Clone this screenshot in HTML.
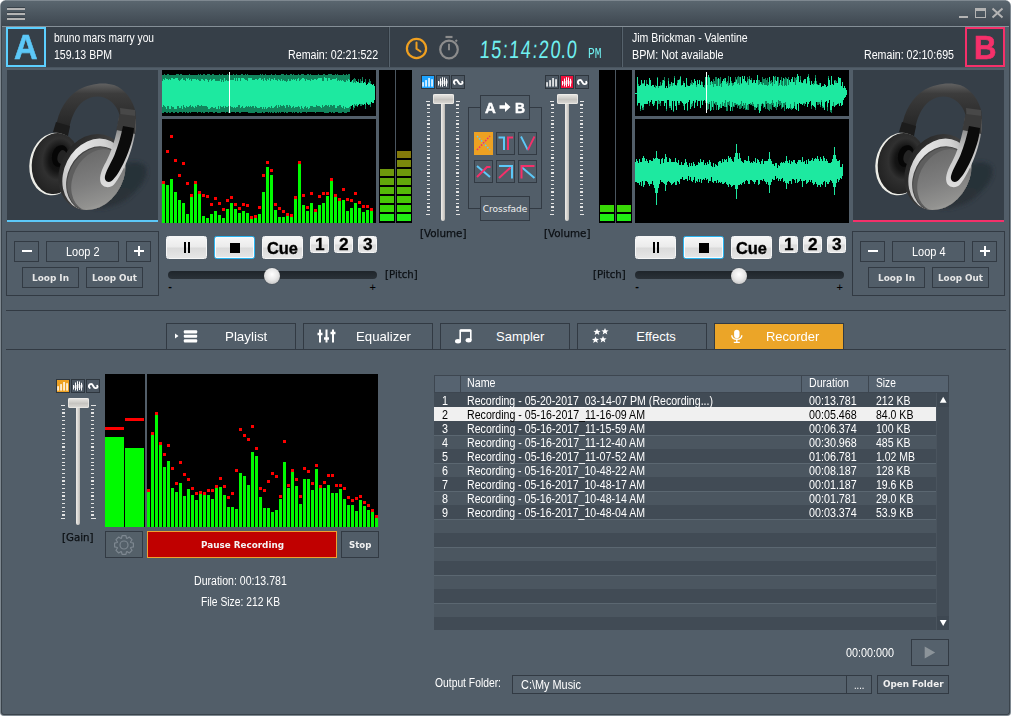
<!DOCTYPE html>
<html lang="en"><head><meta charset="utf-8"><title>DJ Mixer - Recorder</title>
<style>
html,body{margin:0;padding:0;background:#fff;}
body{width:1011px;height:716px;overflow:hidden;position:relative;}
#w{position:absolute;left:0;top:0;width:1011px;height:716px;background:#7f8991;border-radius:6px 6px 4px 4px;overflow:hidden;}
#c{position:absolute;left:1px;top:1px;width:1007px;height:713px;border:1px solid #3a434b;border-top:none;background:#525e69;border-radius:5px 5px 3px 3px;}
#r{position:absolute;left:0;top:0;width:1011px;height:716px;}
#r>div,#r>svg,#r>span{position:absolute;box-sizing:border-box;}
.t b{font-weight:normal;margin:0;}.t i{font-style:normal;margin:0 -1.2px;}
#r svg{overflow:visible;}
.t{white-space:nowrap;line-height:1;transform-origin:0 0;font-family:"Liberation Sans",sans-serif;}
</style></head>
<body>
<div id="w"><div id="c"></div>
<div id="r">
<div style="left:1px;top:1px;width:1009px;height:25px;background:linear-gradient(#5a666f,#4d5861 45%,#3e4750);border-radius:5px 5px 0 0;"></div>
<div style="left:1px;top:0px;width:1009px;height:1px;background:#7e8890;left:5px;width:1001px;"></div>
<div style="left:2px;top:26px;width:1007px;height:1px;background:#858f97;"></div>
<div style="left:7px;top:7px;width:18px;height:1px;background:#39424a;"></div>
<div style="left:7px;top:8px;width:18px;height:2px;background:#b4b4b4;"></div>
<div style="left:7px;top:12px;width:18px;height:1px;background:#39424a;"></div>
<div style="left:7px;top:13px;width:18px;height:2px;background:#b4b4b4;"></div>
<div style="left:7px;top:17px;width:18px;height:1px;background:#39424a;"></div>
<div style="left:7px;top:18px;width:18px;height:2px;background:#b4b4b4;"></div>
<div style="left:959px;top:16px;width:9px;height:2px;background:#b4b4b4;"></div>
<div style="left:975px;top:8px;width:11px;height:10px;border:1px solid #b4b4b4;border-top-width:3px;"></div>
<svg style="left:991px;top:7px;" width="13" height="12" viewBox="0 0 13 12"><path d="M1.5 1.5L11.5 10.5M11.5 1.5L1.5 10.5" stroke="#b4b4b4" stroke-width="2" fill="none"/></svg>
<div style="left:6px;top:27px;width:999px;height:40px;background:#363f48;"></div>
<div style="left:6px;top:67px;width:999px;height:1px;background:#4a555f;"></div>
<div style="left:389px;top:27px;width:1px;height:40px;background:#56626c;"></div>
<div style="left:388px;top:27px;width:1px;height:40px;background:#2f373f;"></div>
<div style="left:622px;top:27px;width:1px;height:40px;background:#56626c;"></div>
<div style="left:621px;top:27px;width:1px;height:40px;background:#2f373f;"></div>
<div style="left:6px;top:27px;width:40px;height:40px;border:2px solid #5ccfff;background:#363f48;"></div>
<span class="t" id="t1" style="left:14.00px;top:29.60px;font-size:34.5px;color:#5cc8f8;font-family:'Liberation Sans', sans-serif;font-weight:bold;transform:scaleX(0.9470);-webkit-text-stroke:0.6px #5cc8f8;">A</span>
<div style="left:965px;top:27px;width:40px;height:40px;border:2px solid #f5306a;background:#363f48;"></div>
<span class="t" id="t2" style="left:974.05px;top:31.07px;font-size:33px;color:#f5306a;font-family:'Liberation Sans', sans-serif;font-weight:bold;transform:scaleX(0.9436);-webkit-text-stroke:0.7px #f5306a;">B</span>
<span class="t" id="t3" style="left:54.40px;top:31.84px;font-size:12px;color:#fff;font-family:'Liberation Sans', sans-serif;transform:scaleX(0.8520);">bruno mars marry you</span>
<span class="t" id="t4" style="left:54.40px;top:48.64px;font-size:12px;color:#fff;font-family:'Liberation Sans', sans-serif;transform:scaleX(0.8782);">159.13 BPM</span>
<span class="t" id="t5" style="left:288.40px;top:48.64px;font-size:12px;color:#fff;font-family:'Liberation Sans', sans-serif;transform:scaleX(0.8895);">Remain: 02:21:522</span>
<span class="t" id="t6" style="left:631.80px;top:31.84px;font-size:12px;color:#fff;font-family:'Liberation Sans', sans-serif;transform:scaleX(0.8777);">Jim Brickman - Valentine</span>
<span class="t" id="t7" style="left:631.80px;top:48.64px;font-size:12px;color:#fff;font-family:'Liberation Sans', sans-serif;transform:scaleX(0.8976);">BPM: Not available</span>
<span class="t" id="t8" style="left:864.40px;top:48.64px;font-size:12px;color:#fff;font-family:'Liberation Sans', sans-serif;transform:scaleX(0.8875);">Remain: 02:10:695</span>
<svg style="left:404px;top:36px;" width="26" height="26" viewBox="0 0 26 26"><circle cx="12.5" cy="12.5" r="9.6" fill="none" stroke="#f0a020" stroke-width="2.2"/><path d="M12.5 6.5V12.7L16.5 15.5" fill="none" stroke="#f0a020" stroke-width="2" stroke-linecap="round"/></svg>
<svg style="left:436px;top:33px;" width="26" height="30" viewBox="0 0 26 30"><circle cx="13" cy="16.5" r="8.8" fill="none" stroke="#8c8c8c" stroke-width="2.2"/><path d="M13 10.8V17.2" stroke="#8c8c8c" stroke-width="1.9"/><path d="M9.5 4H16.5" stroke="#8c8c8c" stroke-width="2.2"/><path d="M19.5 8.5L21 7" stroke="#8c8c8c" stroke-width="2"/></svg>
<span class="t" id="t9" style="left:478.80px;top:37.44px;font-size:25px;color:#70f0f0;font-family:'Liberation Sans', sans-serif;transform:scaleX(0.7244) skewX(-6deg);transform-origin:0 100%;letter-spacing:2px;">15<b>:</b>14<b>:</b>20<i>.</i>0</span>
<span class="t" id="t10" style="left:588.00px;top:46.50px;font-size:15px;color:#70f0f0;font-family:'Liberation Mono', monospace;transform:scaleX(0.7494);">PM</span>
<div style="left:7px;top:70px;width:151.4px;height:150px;background:#363f48;"></div>
<svg style="left:7px;top:70px;" width="152" height="150" viewBox="0 0 152 150">
<defs>
<linearGradient id="hb7" x1="0" y1="0" x2="0" y2="1"><stop offset="0" stop-color="#626262"/><stop offset=".22" stop-color="#3c3c3c"/><stop offset="1" stop-color="#242424"/></linearGradient>
<linearGradient id="cf7" x1=".2" y1=".05" x2=".85" y2=".9"><stop offset="0" stop-color="#6a6a6a"/><stop offset=".5" stop-color="#7e7e7e"/><stop offset=".85" stop-color="#929290"/><stop offset="1" stop-color="#a6a6a2"/></linearGradient>
<radialGradient id="cb7" cx=".55" cy=".42" r=".62"><stop offset="0" stop-color="#0a0a0a"/><stop offset=".32" stop-color="#141414"/><stop offset=".55" stop-color="#303030"/><stop offset="1" stop-color="#202020"/></radialGradient>
<linearGradient id="rim7" x1="0" y1=".9" x2=".9" y2="0"><stop offset="0" stop-color="#b4b4b4"/><stop offset=".35" stop-color="#e6e6e6"/><stop offset=".7" stop-color="#d2d2d2"/><stop offset="1" stop-color="#9a9a9a"/></linearGradient>
<linearGradient id="od7" x1="0" y1="0" x2="1" y2="0"><stop offset="0" stop-color="#262626"/><stop offset=".5" stop-color="#3e3e3e"/><stop offset="1" stop-color="#4a4a4a"/></linearGradient>
<linearGradient id="yk7" x1="0" y1="0" x2="0" y2="1"><stop offset="0" stop-color="#6a6a6a"/><stop offset=".45" stop-color="#c4c4c4"/><stop offset="1" stop-color="#dedede"/></linearGradient>
<filter id="bl7" x="-30%" y="-30%" width="160%" height="160%"><feGaussianBlur stdDeviation="2.2"/></filter>
<clipPath id="cp7"><ellipse cx="85" cy="102" rx="32" ry="39.5" transform="rotate(27 85 102)"/></clipPath>
</defs>
<g filter="url(#bl7)"><ellipse cx="111" cy="115" rx="33" ry="16" fill="#283038" transform="rotate(-34 111 115)"/>
<ellipse cx="104" cy="128" rx="22" ry="8" fill="#2a3239" transform="rotate(-18 104 128)"/></g>
<path d="M49 57C51 42 59 27 72 19.500C82 14 96 11.5 107 15C118 19 126 30 128.5 42L128.5 49L113 46.500C111 38 106 31 97 27.500C90 25 82 27 76 31.500C69 37 64 47 62 60Z" fill="url(#hb7)"/>
<path d="M113 38L128 40L128.5 49L113.5 47Z" fill="#484848"/>
<path d="M46 62L49 52L63 56L61 66Z" fill="#1c1c1c"/>
<ellipse cx="47" cy="94" rx="24.5" ry="31.5" fill="#ecece6" transform="rotate(10 47 94)"/>
<ellipse cx="48.5" cy="93.5" rx="23.6" ry="30.8" fill="url(#cb7)" transform="rotate(10 48.5 93.5)"/>
<ellipse cx="53" cy="86" rx="8" ry="11" fill="#060606" transform="rotate(14 53 86)"/>
<ellipse cx="55" cy="87" rx="4.5" ry="7" fill="#242424" transform="rotate(14 55 87)"/>
<ellipse cx="85" cy="102" rx="32" ry="39.5" fill="url(#od7)" transform="rotate(27 85 102)"/>
<g clip-path="url(#cp7)">
<ellipse cx="87" cy="104.7" rx="30" ry="37.5" fill="url(#rim7)" transform="rotate(27 87 104.7)"/>
<ellipse cx="88.4" cy="109.2" rx="27.9" ry="34.1" fill="#444" transform="rotate(27 88.4 109.2)"/>
<ellipse cx="88.75" cy="109.5" rx="27.25" ry="33.5" fill="#5e5e5e" transform="rotate(27 88.75 109.5)"/>
<ellipse cx="91" cy="110.6" rx="25" ry="32.8" fill="url(#cf7)" transform="rotate(27 91 110.6)"/>
</g>
<path d="M112 47L129 49C129.5 60 126.5 74 122 86C117.5 98 111.5 109 107 114.500C102.5 119 95 117.5 93.5 112C92 106 95 99 99 92C103.5 83 107.5 72 110 60Z" fill="url(#yk7)"/>
<path d="M112.5 44L129 46L128.3 64L109.3 60Z" fill="#3a3a3a"/>
<path d="M116 56L127 58C126.5 68 122.5 80 118 90C113.5 100 108.5 108 104.5 111C101 113.5 97 111 98 106C99.5 100 104 93 107.5 85C111 76 114 66 116 56Z" fill="#0b0b0b"/>
</svg>
<div style="left:7px;top:219.8px;width:151.4px;height:2.3px;background:#5cc8f8;"></div>
<div style="left:853px;top:70px;width:151.4px;height:150px;background:#363f48;"></div>
<svg style="left:853px;top:70px;" width="152" height="150" viewBox="0 0 152 150">
<defs>
<linearGradient id="hb853" x1="0" y1="0" x2="0" y2="1"><stop offset="0" stop-color="#626262"/><stop offset=".22" stop-color="#3c3c3c"/><stop offset="1" stop-color="#242424"/></linearGradient>
<linearGradient id="cf853" x1=".2" y1=".05" x2=".85" y2=".9"><stop offset="0" stop-color="#6a6a6a"/><stop offset=".5" stop-color="#7e7e7e"/><stop offset=".85" stop-color="#929290"/><stop offset="1" stop-color="#a6a6a2"/></linearGradient>
<radialGradient id="cb853" cx=".55" cy=".42" r=".62"><stop offset="0" stop-color="#0a0a0a"/><stop offset=".32" stop-color="#141414"/><stop offset=".55" stop-color="#303030"/><stop offset="1" stop-color="#202020"/></radialGradient>
<linearGradient id="rim853" x1="0" y1=".9" x2=".9" y2="0"><stop offset="0" stop-color="#b4b4b4"/><stop offset=".35" stop-color="#e6e6e6"/><stop offset=".7" stop-color="#d2d2d2"/><stop offset="1" stop-color="#9a9a9a"/></linearGradient>
<linearGradient id="od853" x1="0" y1="0" x2="1" y2="0"><stop offset="0" stop-color="#262626"/><stop offset=".5" stop-color="#3e3e3e"/><stop offset="1" stop-color="#4a4a4a"/></linearGradient>
<linearGradient id="yk853" x1="0" y1="0" x2="0" y2="1"><stop offset="0" stop-color="#6a6a6a"/><stop offset=".45" stop-color="#c4c4c4"/><stop offset="1" stop-color="#dedede"/></linearGradient>
<filter id="bl853" x="-30%" y="-30%" width="160%" height="160%"><feGaussianBlur stdDeviation="2.2"/></filter>
<clipPath id="cp853"><ellipse cx="85" cy="102" rx="32" ry="39.5" transform="rotate(27 85 102)"/></clipPath>
</defs>
<g filter="url(#bl853)"><ellipse cx="111" cy="115" rx="33" ry="16" fill="#283038" transform="rotate(-34 111 115)"/>
<ellipse cx="104" cy="128" rx="22" ry="8" fill="#2a3239" transform="rotate(-18 104 128)"/></g>
<path d="M49 57C51 42 59 27 72 19.500C82 14 96 11.5 107 15C118 19 126 30 128.5 42L128.5 49L113 46.500C111 38 106 31 97 27.500C90 25 82 27 76 31.500C69 37 64 47 62 60Z" fill="url(#hb853)"/>
<path d="M113 38L128 40L128.5 49L113.5 47Z" fill="#484848"/>
<path d="M46 62L49 52L63 56L61 66Z" fill="#1c1c1c"/>
<ellipse cx="47" cy="94" rx="24.5" ry="31.5" fill="#ecece6" transform="rotate(10 47 94)"/>
<ellipse cx="48.5" cy="93.5" rx="23.6" ry="30.8" fill="url(#cb853)" transform="rotate(10 48.5 93.5)"/>
<ellipse cx="53" cy="86" rx="8" ry="11" fill="#060606" transform="rotate(14 53 86)"/>
<ellipse cx="55" cy="87" rx="4.5" ry="7" fill="#242424" transform="rotate(14 55 87)"/>
<ellipse cx="85" cy="102" rx="32" ry="39.5" fill="url(#od853)" transform="rotate(27 85 102)"/>
<g clip-path="url(#cp853)">
<ellipse cx="87" cy="104.7" rx="30" ry="37.5" fill="url(#rim853)" transform="rotate(27 87 104.7)"/>
<ellipse cx="88.4" cy="109.2" rx="27.9" ry="34.1" fill="#444" transform="rotate(27 88.4 109.2)"/>
<ellipse cx="88.75" cy="109.5" rx="27.25" ry="33.5" fill="#5e5e5e" transform="rotate(27 88.75 109.5)"/>
<ellipse cx="91" cy="110.6" rx="25" ry="32.8" fill="url(#cf853)" transform="rotate(27 91 110.6)"/>
</g>
<path d="M112 47L129 49C129.5 60 126.5 74 122 86C117.5 98 111.5 109 107 114.500C102.5 119 95 117.5 93.5 112C92 106 95 99 99 92C103.5 83 107.5 72 110 60Z" fill="url(#yk853)"/>
<path d="M112.5 44L129 46L128.3 64L109.3 60Z" fill="#3a3a3a"/>
<path d="M116 56L127 58C126.5 68 122.5 80 118 90C113.5 100 108.5 108 104.5 111C101 113.5 97 111 98 106C99.5 100 104 93 107.5 85C111 76 114 66 116 56Z" fill="#0b0b0b"/>
</svg>
<div style="left:853px;top:219.8px;width:151.4px;height:2.3px;background:#f5306a;"></div>
<div style="left:162px;top:70px;width:214px;height:46px;background:#000;"></div>
<svg style="left:162px;top:70px;shape-rendering:crispEdges;" width="214" height="46" viewBox="0 0 214 46"><path d="M0.5 5V43M1.5 5V43M2.5 4V42M3.5 5V42M4.5 5V43M5.5 4V43M6.5 4V42M7.5 5V43M8.5 5V43M9.5 5V42M10.5 5V42M11.5 5V43M12.5 5V43M13.5 5V42M14.5 4V42M15.5 4V43M16.5 4V43M17.5 5V42M18.5 4V42M19.5 4V42M20.5 5V43M21.5 5V42M22.5 5V42M23.5 5V43M24.5 5V42M25.5 5V43M26.5 5V43M27.5 4V42M28.5 5V43M29.5 5V42M30.5 5V42M31.5 5V42M32.5 5V42M33.5 5V42M34.5 5V42M35.5 5V43M36.5 4V42M37.5 5V42M38.5 4V42M39.5 5V43M40.5 5V42M41.5 4V43M42.5 4V43M43.5 5V42M44.5 5V42M45.5 4V42M46.5 4V43M47.5 4V42M48.5 5V42M49.5 5V42M50.5 4V42M51.5 4V43M52.5 5V43M53.5 5V42M54.5 5V42M55.5 5V43M56.5 5V43M57.5 4V43M58.5 5V43M59.5 5V42M60.5 4V42M61.5 5V42M62.5 5V42M63.5 5V43M64.5 5V42M65.5 4V42M66.5 5V43M67.5 4V43M68.5 5V43M69.5 5V42M70.5 5V42M71.5 4V42M72.5 5V42M73.5 5V43M74.5 4V42M75.5 5V42M76.5 5V42M77.5 5V43M78.5 5V43M79.5 4V42M80.5 4V42M81.5 5V42M82.5 5V42M83.5 4V42M84.5 5V42M85.5 4V42M86.5 5V43M87.5 5V43M88.5 5V43M89.5 5V43M90.5 5V43M91.5 5V43M92.5 5V43M93.5 5V42M94.5 5V42M95.5 5V43M96.5 5V43M97.5 5V43M98.5 4V43M99.5 5V43M100.5 4V42M101.5 5V43M102.5 5V43M103.5 4V42M104.5 5V42M105.5 5V42M106.5 5V43M107.5 5V42M108.5 5V43M109.5 4V42M110.5 5V43M111.5 5V43M112.5 5V42M113.5 4V43M114.5 5V43M115.5 5V42M116.5 5V43M117.5 5V42M118.5 5V43M119.5 4V42M120.5 4V42M121.5 4V42M122.5 5V43M123.5 5V42M124.5 4V43M125.5 5V43M126.5 5V42M127.5 5V42M128.5 4V42M129.5 4V42M130.5 5V43M131.5 4V42M132.5 5V43M133.5 5V42M134.5 5V42M135.5 5V43M136.5 4V43M137.5 5V42M138.5 5V43M139.5 4V43M140.5 4V42M141.5 4V42M142.5 5V42M143.5 5V42M144.5 5V43M145.5 4V42M146.5 4V42M147.5 5V42M148.5 4V42M149.5 5V42M150.5 5V42M151.5 5V42M152.5 5V42M153.5 5V43M154.5 5V42M155.5 5V42M156.5 4V42M157.5 5V42M158.5 5V42M159.5 5V42M160.5 5V42M161.5 4V42M162.5 4V43M163.5 5V43M164.5 5V43M165.5 5V43M166.5 4V43M167.5 4V42M168.5 4V42M169.5 4V43M170.5 5V42M171.5 5V43M172.5 5V43M173.5 4V42M174.5 5V42M175.5 4V42M176.5 5V43M177.5 5V43M178.5 5V43M179.5 5V43M180.5 5V42M181.5 4V42M182.5 5V43M183.5 5V43M184.5 4V43M185.5 5V42M186.5 4V42M187.5 4V42M188.5 12V39M189.5 11V36M190.5 10V35M191.5 9V40M192.5 8V38M193.5 9V36M194.5 11V36M195.5 12V37M196.5 9V35M197.5 13V34M198.5 9V36M199.5 11V36M200.5 7V35M201.5 13V35M202.5 12V34M203.5 9V39M204.5 15V33M205.5 14V34M206.5 12V35M207.5 9V35M208.5 11V37M209.5 14V32M210.5 15V33M211.5 14V33M212.5 16V30" stroke="#11855c" stroke-width="1" fill="none"/><path d="M0.5 11V37M1.5 9V35M2.5 10V36M3.5 8V37M4.5 9V39M5.5 9V36M6.5 10V36M7.5 9V39M8.5 10V39M9.5 8V36M10.5 8V37M11.5 9V37M12.5 9V39M13.5 8V39M14.5 8V39M15.5 8V36M16.5 10V36M17.5 11V38M18.5 10V38M19.5 9V36M20.5 8V39M21.5 10V35M22.5 10V37M23.5 11V38M24.5 8V36M25.5 9V37M26.5 8V37M27.5 10V36M28.5 9V35M29.5 11V37M30.5 9V36M31.5 9V37M32.5 9V38M33.5 9V36M34.5 10V37M35.5 9V35M36.5 10V35M37.5 11V36M38.5 11V36M39.5 9V35M40.5 9V36M41.5 10V36M42.5 11V36M43.5 9V36M44.5 9V36M45.5 10V37M46.5 12V39M47.5 10V39M48.5 9V38M49.5 11V37M50.5 10V37M51.5 9V38M52.5 9V38M53.5 11V37M54.5 11V39M55.5 11V39M56.5 11V36M57.5 11V39M58.5 9V36M59.5 12V37M60.5 10V37M61.5 12V36M62.5 8V38M63.5 11V36M64.5 10V37M65.5 11V37M66.5 11V36M67.5 9V36M68.5 10V36M69.5 10V37M70.5 10V37M71.5 10V38M72.5 8V37M73.5 11V38M74.5 8V37M75.5 11V37M76.5 8V35M77.5 8V35M78.5 11V38M79.5 8V37M80.5 8V36M81.5 8V38M82.5 9V38M83.5 10V37M84.5 10V36M85.5 11V37M86.5 8V36M87.5 8V37M88.5 8V36M89.5 8V37M90.5 10V36M91.5 10V36M92.5 10V38M93.5 9V36M94.5 9V37M95.5 10V38M96.5 9V38M97.5 8V38M98.5 8V37M99.5 10V37M100.5 9V39M101.5 11V37M102.5 8V39M103.5 10V37M104.5 11V39M105.5 9V38M106.5 10V37M107.5 8V37M108.5 11V38M109.5 9V36M110.5 9V38M111.5 10V38M112.5 8V37M113.5 10V36M114.5 10V35M115.5 11V38M116.5 9V35M117.5 10V37M118.5 11V35M119.5 9V36M120.5 11V36M121.5 10V35M122.5 11V36M123.5 11V38M124.5 12V35M125.5 11V35M126.5 9V37M127.5 11V35M128.5 11V36M129.5 9V38M130.5 10V37M131.5 9V36M132.5 10V38M133.5 9V37M134.5 11V37M135.5 9V37M136.5 8V36M137.5 11V37M138.5 10V39M139.5 9V36M140.5 8V38M141.5 8V39M142.5 9V37M143.5 11V36M144.5 9V38M145.5 10V37M146.5 10V39M147.5 10V38M148.5 11V36M149.5 9V36M150.5 10V36M151.5 10V37M152.5 9V37M153.5 9V37M154.5 10V35M155.5 9V36M156.5 8V36M157.5 8V36M158.5 8V37M159.5 8V38M160.5 11V35M161.5 11V37M162.5 7V36M163.5 8V35M164.5 8V35M165.5 11V36M166.5 8V35M167.5 8V37M168.5 10V35M169.5 10V35M170.5 9V36M171.5 9V35M172.5 9V35M173.5 9V38M174.5 8V38M175.5 11V36M176.5 10V36M177.5 11V35M178.5 10V35M179.5 11V37M180.5 10V38M181.5 11V36M182.5 12V39M183.5 12V37M184.5 10V38M185.5 11V38M186.5 9V38M187.5 10V37M188.5 12V36M189.5 12V36M190.5 10V35M191.5 13V37M192.5 12V34M193.5 13V35M194.5 11V34M195.5 12V36M196.5 12V35M197.5 13V34M198.5 13V34M199.5 13V34M200.5 11V34M201.5 13V35M202.5 12V34M203.5 13V35M204.5 15V32M205.5 14V34M206.5 13V35M207.5 13V34M208.5 14V34M209.5 14V32M210.5 15V33M211.5 14V33M212.5 16V30" stroke="#1de9a0" stroke-width="1" fill="none"/><rect x="67" y="2" width="1" height="41" fill="#fff"/></svg>
<div style="left:162px;top:119px;width:214px;height:104px;background:#000;"></div>
<svg style="left:162px;top:119px;shape-rendering:crispEdges;" width="214" height="104" viewBox="0 0 214 104"><rect x="0" y="64" width="3" height="40" fill="#00fa00"/><rect x="0" y="62" width="3" height="3" fill="#f00"/><rect x="4" y="66" width="3" height="38" fill="#00fa00"/><rect x="4" y="31" width="3" height="3" fill="#f00"/><rect x="8" y="60" width="3" height="44" fill="#00fa00"/><rect x="8" y="16" width="3" height="3" fill="#f00"/><rect x="12" y="73" width="3" height="31" fill="#00fa00"/><rect x="12" y="40" width="3" height="3" fill="#f00"/><rect x="16" y="81" width="3" height="23" fill="#00fa00"/><rect x="16" y="55" width="3" height="3" fill="#f00"/><rect x="20" y="84" width="3" height="20" fill="#00fa00"/><rect x="20" y="43" width="3" height="3" fill="#f00"/><rect x="24" y="95" width="3" height="9" fill="#00fa00"/><rect x="24" y="63" width="3" height="3" fill="#f00"/><rect x="28" y="78" width="3" height="26" fill="#00fa00"/><rect x="28" y="75" width="3" height="3" fill="#f00"/><rect x="32" y="64" width="3" height="40" fill="#00fa00"/><rect x="32" y="62" width="3" height="3" fill="#f00"/><rect x="36" y="75" width="3" height="29" fill="#00fa00"/><rect x="36" y="72" width="3" height="3" fill="#f00"/><rect x="40" y="97" width="3" height="7" fill="#00fa00"/><rect x="40" y="75" width="3" height="3" fill="#f00"/><rect x="44" y="99" width="3" height="5" fill="#00fa00"/><rect x="44" y="76" width="3" height="3" fill="#f00"/><rect x="48" y="95" width="3" height="9" fill="#00fa00"/><rect x="48" y="84" width="3" height="3" fill="#f00"/><rect x="52" y="92" width="3" height="12" fill="#00fa00"/><rect x="52" y="78" width="3" height="3" fill="#f00"/><rect x="56" y="96" width="3" height="8" fill="#00fa00"/><rect x="56" y="83" width="3" height="3" fill="#f00"/><rect x="60" y="99" width="3" height="5" fill="#00fa00"/><rect x="60" y="89" width="3" height="3" fill="#f00"/><rect x="64" y="90" width="3" height="14" fill="#00fa00"/><rect x="64" y="80" width="3" height="3" fill="#f00"/><rect x="68" y="84" width="3" height="20" fill="#00fa00"/><rect x="68" y="77" width="3" height="3" fill="#f00"/><rect x="72" y="90" width="3" height="14" fill="#00fa00"/><rect x="72" y="84" width="3" height="3" fill="#f00"/><rect x="76" y="94" width="3" height="10" fill="#00fa00"/><rect x="76" y="88" width="3" height="3" fill="#f00"/><rect x="80" y="92" width="3" height="12" fill="#00fa00"/><rect x="80" y="84" width="3" height="3" fill="#f00"/><rect x="84" y="94" width="3" height="10" fill="#00fa00"/><rect x="84" y="85" width="3" height="3" fill="#f00"/><rect x="88" y="100" width="3" height="4" fill="#00fa00"/><rect x="88" y="97" width="3" height="3" fill="#f00"/><rect x="92" y="99" width="3" height="5" fill="#00fa00"/><rect x="92" y="96" width="3" height="3" fill="#f00"/><rect x="96" y="95" width="3" height="9" fill="#00fa00"/><rect x="96" y="87" width="3" height="3" fill="#f00"/><rect x="100" y="73" width="3" height="31" fill="#00fa00"/><rect x="100" y="55" width="3" height="3" fill="#f00"/><rect x="104" y="48" width="3" height="56" fill="#00fa00"/><rect x="104" y="42" width="3" height="3" fill="#f00"/><rect x="108" y="56" width="3" height="48" fill="#00fa00"/><rect x="108" y="50" width="3" height="3" fill="#f00"/><rect x="112" y="91" width="3" height="13" fill="#00fa00"/><rect x="112" y="84" width="3" height="3" fill="#f00"/><rect x="116" y="98" width="3" height="6" fill="#00fa00"/><rect x="116" y="88" width="3" height="3" fill="#f00"/><rect x="120" y="98" width="3" height="6" fill="#00fa00"/><rect x="120" y="91" width="3" height="3" fill="#f00"/><rect x="124" y="97" width="3" height="7" fill="#00fa00"/><rect x="124" y="94" width="3" height="3" fill="#f00"/><rect x="128" y="98" width="3" height="6" fill="#00fa00"/><rect x="128" y="95" width="3" height="3" fill="#f00"/><rect x="132" y="80" width="3" height="24" fill="#00fa00"/><rect x="132" y="77" width="3" height="3" fill="#f00"/><rect x="136" y="45" width="3" height="59" fill="#00fa00"/><rect x="136" y="42" width="3" height="3" fill="#f00"/><rect x="140" y="86" width="3" height="18" fill="#00fa00"/><rect x="140" y="75" width="3" height="3" fill="#f00"/><rect x="144" y="92" width="3" height="12" fill="#00fa00"/><rect x="144" y="87" width="3" height="3" fill="#f00"/><rect x="148" y="84" width="3" height="20" fill="#00fa00"/><rect x="148" y="73" width="3" height="3" fill="#f00"/><rect x="152" y="93" width="3" height="11" fill="#00fa00"/><rect x="152" y="90" width="3" height="3" fill="#f00"/><rect x="156" y="86" width="3" height="18" fill="#00fa00"/><rect x="156" y="76" width="3" height="3" fill="#f00"/><rect x="160" y="84" width="3" height="20" fill="#00fa00"/><rect x="160" y="73" width="3" height="3" fill="#f00"/><rect x="164" y="77" width="3" height="27" fill="#00fa00"/><rect x="164" y="73" width="3" height="3" fill="#f00"/><rect x="168" y="62" width="3" height="42" fill="#00fa00"/><rect x="168" y="59" width="3" height="3" fill="#f00"/><rect x="172" y="78" width="3" height="26" fill="#00fa00"/><rect x="172" y="75" width="3" height="3" fill="#f00"/><rect x="176" y="82" width="3" height="22" fill="#00fa00"/><rect x="176" y="79" width="3" height="3" fill="#f00"/><rect x="180" y="81" width="3" height="23" fill="#00fa00"/><rect x="180" y="69" width="3" height="3" fill="#f00"/><rect x="184" y="92" width="3" height="12" fill="#00fa00"/><rect x="184" y="79" width="3" height="3" fill="#f00"/><rect x="188" y="89" width="3" height="15" fill="#00fa00"/><rect x="188" y="80" width="3" height="3" fill="#f00"/><rect x="192" y="84" width="3" height="20" fill="#00fa00"/><rect x="192" y="73" width="3" height="3" fill="#f00"/><rect x="196" y="89" width="3" height="15" fill="#00fa00"/><rect x="196" y="82" width="3" height="3" fill="#f00"/><rect x="200" y="93" width="3" height="11" fill="#00fa00"/><rect x="200" y="86" width="3" height="3" fill="#f00"/><rect x="204" y="91" width="3" height="13" fill="#00fa00"/><rect x="204" y="86" width="3" height="3" fill="#f00"/><rect x="208" y="92" width="3" height="12" fill="#00fa00"/><rect x="208" y="89" width="3" height="3" fill="#f00"/></svg>
<div style="left:379px;top:70px;width:33px;height:153px;background:#000;"></div>
<div style="left:395px;top:70px;width:1px;height:153px;background:#4a555f;"></div>
<div style="left:380px;top:214px;width:14px;height:7px;background:#20ee14;"></div>
<div style="left:380px;top:205px;width:14px;height:7px;background:#38d806;"></div>
<div style="left:380px;top:196px;width:14px;height:7px;background:#48c806;"></div>
<div style="left:380px;top:187px;width:14px;height:7px;background:#55b808;"></div>
<div style="left:380px;top:178px;width:14px;height:7px;background:#62a80a;"></div>
<div style="left:380px;top:169px;width:14px;height:7px;background:#6e980c;"></div>
<div style="left:397px;top:214px;width:14px;height:7px;background:#20ee14;"></div>
<div style="left:397px;top:205px;width:14px;height:7px;background:#38d806;"></div>
<div style="left:397px;top:196px;width:14px;height:7px;background:#48c806;"></div>
<div style="left:397px;top:187px;width:14px;height:7px;background:#55b808;"></div>
<div style="left:397px;top:178px;width:14px;height:7px;background:#62a80a;"></div>
<div style="left:397px;top:169px;width:14px;height:7px;background:#6e980c;"></div>
<div style="left:397px;top:160px;width:14px;height:7px;background:#7a880c;"></div>
<div style="left:397px;top:151px;width:14px;height:7px;background:#847a0a;"></div>
<div style="left:599px;top:70px;width:33px;height:153px;background:#000;"></div>
<div style="left:615px;top:70px;width:1px;height:153px;background:#4a555f;"></div>
<div style="left:600px;top:214px;width:14px;height:7px;background:#20ee14;"></div>
<div style="left:600px;top:205px;width:14px;height:7px;background:#38d806;"></div>
<div style="left:617px;top:214px;width:14px;height:7px;background:#20ee14;"></div>
<div style="left:617px;top:205px;width:14px;height:7px;background:#38d806;"></div>
<div style="left:635px;top:70px;width:214px;height:46px;background:#000;"></div>
<svg style="left:635px;top:70px;shape-rendering:crispEdges;" width="214" height="46" viewBox="0 0 214 46"><path d="M0.5 23V24M1.5 23V24M2.5 7V36M3.5 14V33M4.5 16V33M5.5 15V41M6.5 10V36M7.5 13V40M8.5 13V40M9.5 10V34M10.5 16V34M11.5 10V34M12.5 14V34M13.5 15V31M14.5 8V36M15.5 10V32M16.5 16V30M17.5 15V34M18.5 15V36M19.5 17V35M20.5 15V31M21.5 16V31M22.5 7V40M23.5 16V34M24.5 16V34M25.5 12V36M26.5 15V31M27.5 10V31M28.5 10V31M29.5 7V36M30.5 18V33M31.5 16V41M32.5 18V30M33.5 8V30M34.5 14V38M35.5 14V38M36.5 12V40M37.5 13V31M38.5 13V42M39.5 6V31M40.5 15V36M41.5 15V40M42.5 10V31M43.5 10V35M44.5 9V35M45.5 6V31M46.5 15V32M47.5 15V33M48.5 11V36M49.5 13V40M50.5 17V34M51.5 8V33M52.5 15V41M53.5 16V32M54.5 16V30M55.5 13V39M56.5 10V37M57.5 12V36M58.5 13V31M59.5 9V38M60.5 11V33M61.5 15V30M62.5 10V36M63.5 14V31M64.5 10V31M65.5 15V38M66.5 11V31M67.5 12V35M68.5 17V31M69.5 15V30M70.5 7V33M71.5 13V33M72.5 7V40M73.5 5V39M74.5 7V34M75.5 12V41M76.5 11V40M77.5 12V37M78.5 9V40M79.5 11V34M80.5 7V35M81.5 7V40M82.5 9V35M83.5 8V40M84.5 9V39M85.5 7V38M86.5 13V38M87.5 11V36M88.5 9V36M89.5 8V37M90.5 8V37M91.5 12V41M92.5 11V41M93.5 6V35M94.5 13V36M95.5 7V41M96.5 11V37M97.5 13V41M98.5 13V37M99.5 12V37M100.5 7V35M101.5 9V35M102.5 7V38M103.5 6V36M104.5 7V39M105.5 7V39M106.5 13V38M107.5 6V36M108.5 9V39M109.5 6V38M110.5 11V40M111.5 12V40M112.5 7V40M113.5 9V40M114.5 6V34M115.5 10V35M116.5 8V35M117.5 13V36M118.5 10V36M119.5 10V40M120.5 13V40M121.5 10V38M122.5 5V37M123.5 10V40M124.5 10V43M125.5 12V41M126.5 12V36M127.5 7V34M128.5 9V38M129.5 9V37M130.5 8V39M131.5 10V34M132.5 8V39M133.5 12V40M134.5 7V41M135.5 11V39M136.5 10V40M137.5 12V35M138.5 6V37M139.5 7V37M140.5 6V38M141.5 11V40M142.5 7V37M143.5 7V34M144.5 13V36M145.5 10V35M146.5 7V39M147.5 11V38M148.5 8V37M149.5 9V41M150.5 7V35M151.5 8V39M152.5 9V38M153.5 7V39M154.5 10V38M155.5 12V39M156.5 9V40M157.5 7V39M158.5 12V38M159.5 7V36M160.5 8V39M161.5 7V40M162.5 4V34M163.5 6V41M164.5 12V33M165.5 6V34M166.5 12V34M167.5 13V35M168.5 10V34M169.5 9V36M170.5 9V34M171.5 13V32M172.5 7V37M173.5 4V34M174.5 8V32M175.5 15V31M176.5 11V39M177.5 14V35M178.5 13V36M179.5 11V37M180.5 5V40M181.5 11V32M182.5 14V35M183.5 15V35M184.5 13V34M185.5 13V37M186.5 17V32M187.5 16V38M188.5 16V38M189.5 14V40M190.5 15V32M191.5 17V31M192.5 16V41M193.5 6V33M194.5 10V30M195.5 15V42M196.5 6V43M197.5 14V36M198.5 15V36M199.5 10V37M200.5 10V36M201.5 11V35M202.5 13V34M203.5 7V34M204.5 8V36M205.5 8V33M206.5 16V36M207.5 12V35M208.5 18V30M209.5 16V28M210.5 18V27M211.5 20V25" stroke="#11855c" stroke-width="1" fill="none"/><path d="M0.5 23V24M1.5 23V24M2.5 7V35M3.5 16V33M4.5 16V33M5.5 15V39M6.5 10V35M7.5 14V38M8.5 14V37M9.5 10V34M10.5 16V34M11.5 14V34M12.5 14V34M13.5 15V31M14.5 8V33M15.5 10V32M16.5 16V30M17.5 15V34M18.5 15V36M19.5 17V33M20.5 18V31M21.5 16V31M22.5 8V39M23.5 18V30M24.5 16V31M25.5 16V33M26.5 16V31M27.5 13V31M28.5 10V31M29.5 11V36M30.5 18V33M31.5 16V39M32.5 18V30M33.5 11V30M34.5 17V36M35.5 16V36M36.5 12V40M37.5 16V31M38.5 13V41M39.5 8V31M40.5 15V36M41.5 16V40M42.5 13V31M43.5 10V33M44.5 10V33M45.5 7V31M46.5 16V31M47.5 15V33M48.5 13V34M49.5 13V40M50.5 17V34M51.5 8V33M52.5 16V40M53.5 16V32M54.5 16V30M55.5 15V39M56.5 14V34M57.5 15V33M58.5 13V31M59.5 9V38M60.5 11V32M61.5 17V30M62.5 10V36M63.5 14V31M64.5 10V31M65.5 15V38M66.5 12V30M67.5 15V35M68.5 17V31M69.5 18V30M70.5 7V31M71.5 15V32M72.5 15V33M73.5 5V34M74.5 8V32M75.5 15V41M76.5 11V31M77.5 14V37M78.5 17V31M79.5 14V33M80.5 14V32M81.5 16V32M82.5 16V35M83.5 8V40M84.5 16V37M85.5 14V34M86.5 17V38M87.5 11V32M88.5 9V36M89.5 11V33M90.5 8V30M91.5 14V37M92.5 13V32M93.5 16V32M94.5 15V31M95.5 7V41M96.5 13V37M97.5 16V32M98.5 15V36M99.5 12V33M100.5 12V33M101.5 10V34M102.5 14V34M103.5 13V35M104.5 15V35M105.5 7V34M106.5 14V31M107.5 6V36M108.5 9V33M109.5 6V35M110.5 11V33M111.5 13V39M112.5 11V35M113.5 15V34M114.5 9V34M115.5 10V33M116.5 10V34M117.5 13V32M118.5 12V34M119.5 10V37M120.5 13V37M121.5 10V38M122.5 5V34M123.5 15V34M124.5 14V43M125.5 12V41M126.5 14V34M127.5 15V33M128.5 13V34M129.5 15V37M130.5 15V31M131.5 15V31M132.5 16V33M133.5 15V33M134.5 7V34M135.5 14V34M136.5 13V33M137.5 16V30M138.5 6V33M139.5 14V37M140.5 10V36M141.5 11V32M142.5 7V37M143.5 16V30M144.5 15V31M145.5 10V31M146.5 15V33M147.5 16V37M148.5 8V33M149.5 16V33M150.5 15V32M151.5 16V39M152.5 9V38M153.5 15V39M154.5 10V38M155.5 12V34M156.5 9V38M157.5 7V39M158.5 12V38M159.5 12V32M160.5 15V39M161.5 10V40M162.5 4V34M163.5 6V41M164.5 12V33M165.5 10V34M166.5 13V34M167.5 13V35M168.5 11V33M169.5 9V33M170.5 9V34M171.5 14V32M172.5 7V37M173.5 6V34M174.5 11V32M175.5 15V31M176.5 11V36M177.5 14V35M178.5 15V36M179.5 14V37M180.5 8V38M181.5 14V32M182.5 15V32M183.5 15V32M184.5 15V32M185.5 13V35M186.5 17V30M187.5 16V36M188.5 16V37M189.5 14V40M190.5 15V32M191.5 17V31M192.5 16V37M193.5 8V33M194.5 10V30M195.5 15V40M196.5 6V40M197.5 14V36M198.5 15V32M199.5 11V37M200.5 13V35M201.5 13V35M202.5 13V34M203.5 7V33M204.5 8V36M205.5 8V33M206.5 16V36M207.5 12V35M208.5 18V30M209.5 16V28M210.5 18V27M211.5 20V25" stroke="#1de9a0" stroke-width="1" fill="none"/><rect x="71" y="2" width="1" height="41" fill="#fff"/></svg>
<div style="left:635px;top:119px;width:214px;height:104px;background:#000;"></div>
<svg style="left:635px;top:119px;shape-rendering:crispEdges;" width="214" height="104" viewBox="0 0 214 104"><path d="M0.5 43V63M1.5 40V63M2.5 42V64M3.5 44V64M4.5 40V66M5.5 43V63M6.5 43V67M7.5 39V62M8.5 37V68M9.5 39V66M10.5 42V62M11.5 40V62M12.5 42V63M13.5 44V65M14.5 41V67M15.5 41V65M16.5 42V65M17.5 42V62M18.5 39V66M19.5 40V69M20.5 39V74M21.5 32V86M22.5 39V74M23.5 40V69M24.5 40V65M25.5 45V61M26.5 40V63M27.5 39V63M28.5 44V64M29.5 40V65M30.5 35V72M31.5 38V66M32.5 43V63M33.5 43V62M34.5 39V63M35.5 40V64M36.5 43V66M37.5 43V65M38.5 43V64M39.5 43V63M40.5 39V66M41.5 43V66M42.5 44V62M43.5 41V63M44.5 46V65M45.5 46V60M46.5 43V60M47.5 46V58M48.5 46V61M49.5 44V61M50.5 40V60M51.5 43V60M52.5 46V62M53.5 48V57M54.5 44V61M55.5 47V58M56.5 44V62M57.5 47V63M58.5 43V61M59.5 45V58M60.5 47V64M61.5 46V62M62.5 46V63M63.5 43V60M64.5 44V63M65.5 40V60M66.5 43V64M67.5 43V61M68.5 41V60M69.5 46V61M70.5 44V59M71.5 46V61M72.5 43V60M73.5 45V64M74.5 41V62M75.5 43V62M76.5 47V58M77.5 48V63M78.5 44V64M79.5 48V62M80.5 45V62M81.5 46V64M82.5 47V61M83.5 43V64M84.5 42V63M85.5 42V64M86.5 44V63M87.5 40V65M88.5 43V65M89.5 40V64M90.5 41V63M91.5 40V65M92.5 43V66M93.5 37V68M94.5 39V65M95.5 38V66M96.5 40V68M97.5 42V67M98.5 43V66M99.5 38V66M100.5 34V70M101.5 25V80M102.5 34V70M103.5 40V66M104.5 34V66M105.5 39V65M106.5 42V66M107.5 43V64M108.5 44V63M109.5 41V65M110.5 41V62M111.5 42V61M112.5 42V62M113.5 37V65M114.5 42V65M115.5 44V61M116.5 43V61M117.5 44V62M118.5 42V63M119.5 43V65M120.5 39V63M121.5 44V61M122.5 40V61M123.5 41V66M124.5 43V65M125.5 45V61M126.5 42V61M127.5 40V62M128.5 45V60M129.5 42V62M130.5 42V63M131.5 42V65M132.5 42V63M133.5 40V66M134.5 33V74M135.5 40V66M136.5 42V63M137.5 45V60M138.5 45V61M139.5 47V61M140.5 44V57M141.5 44V60M142.5 49V59M143.5 46V62M144.5 47V60M145.5 44V62M146.5 43V60M147.5 44V59M148.5 43V63M149.5 44V62M150.5 42V64M151.5 37V70M152.5 42V64M153.5 44V65M154.5 41V62M155.5 45V62M156.5 42V65M157.5 43V60M158.5 41V60M159.5 41V61M160.5 44V64M161.5 45V60M162.5 43V64M163.5 41V63M164.5 41V62M165.5 41V60M166.5 43V62M167.5 38V68M168.5 43V62M169.5 42V62M170.5 45V61M171.5 41V65M172.5 45V64M173.5 40V63M174.5 42V61M175.5 42V63M176.5 41V61M177.5 39V64M178.5 42V66M179.5 40V65M180.5 39V63M181.5 40V65M182.5 37V68M183.5 40V66M184.5 42V66M185.5 38V68M186.5 40V65M187.5 42V66M188.5 37V63M189.5 39V62M190.5 42V68M191.5 40V63M192.5 42V65M193.5 44V65M194.5 44V63M195.5 44V61M196.5 43V62M197.5 40V64M198.5 36V68M199.5 28V76M200.5 36V68M201.5 40V64M202.5 42V60M203.5 42V63M204.5 41V61M205.5 48V59M206.5 48V60M207.5 45V57" stroke="#1de9a0" stroke-width="1" fill="none"/></svg>
<div style="left:421px;top:75px;width:14px;height:14px;border:1px solid #2e363e;background:#1ea4ff;"></div>
<div style="left:436px;top:75px;width:14px;height:14px;border:1px solid #2e363e;background:#4c5762;"></div>
<div style="left:451px;top:75px;width:14px;height:14px;border:1px solid #2e363e;background:#4c5762;"></div>
<svg style="left:422px;top:76px;" width="12" height="12" viewBox="0 0 12 12"><rect x="0.3" y="6.2" width="1.5" height="4.4" fill="#fff"/><rect x="3.3" y="4.1" width="1.5" height="6.5" fill="#fff"/><rect x="6.3" y="2" width="1.5" height="8.6" fill="#fff"/><rect x="9.3" y="3.2" width="1.5" height="7.4" fill="#fff"/></svg>
<svg style="left:437px;top:76px;" width="12" height="12" viewBox="0 0 12 12"><path d="M1.5 5V9.5M3.5 2.5V10.5M5.5 1.2V10.8M7.5 1.5V10M9.5 2.8V10.6" stroke="#fff" stroke-width="1" fill="none"/><path d="M2.5 5.5V8M4.5 5V9M6.5 4V8M8.5 5V8.5M10.5 4.5V7.5" stroke="#fff" stroke-width="1" fill="none" opacity=".45"/></svg>
<svg style="left:452px;top:76px;" width="12" height="12" viewBox="0 0 12 12"><path d="M2.7 7.9C1 6.4 2 4 4.2 4C6.2 4 6.2 8 8.4 8.1C10.3 8.2 11 7.2 10.2 5.8" stroke="#fff" stroke-width="1.9" fill="none" stroke-linecap="round"/></svg>
<div style="left:545px;top:75px;width:14px;height:14px;border:1px solid #2e363e;background:#4c5762;"></div>
<div style="left:560px;top:75px;width:14px;height:14px;border:1px solid #2e363e;background:#f0103c;"></div>
<div style="left:575px;top:75px;width:14px;height:14px;border:1px solid #2e363e;background:#4c5762;"></div>
<svg style="left:546px;top:76px;" width="12" height="12" viewBox="0 0 12 12"><rect x="0.3" y="6.2" width="1.5" height="4.4" fill="#fff"/><rect x="3.3" y="4.1" width="1.5" height="6.5" fill="#fff"/><rect x="6.3" y="2" width="1.5" height="8.6" fill="#fff"/><rect x="9.3" y="3.2" width="1.5" height="7.4" fill="#fff"/></svg>
<svg style="left:561px;top:76px;" width="12" height="12" viewBox="0 0 12 12"><path d="M1.5 5V9.5M3.5 2.5V10.5M5.5 1.2V10.8M7.5 1.5V10M9.5 2.8V10.6" stroke="#fff" stroke-width="1" fill="none"/><path d="M2.5 5.5V8M4.5 5V9M6.5 4V8M8.5 5V8.5M10.5 4.5V7.5" stroke="#fff" stroke-width="1" fill="none" opacity=".45"/></svg>
<svg style="left:576px;top:76px;" width="12" height="12" viewBox="0 0 12 12"><path d="M2.7 7.9C1 6.4 2 4 4.2 4C6.2 4 6.2 8 8.4 8.1C10.3 8.2 11 7.2 10.2 5.8" stroke="#fff" stroke-width="1.9" fill="none" stroke-linecap="round"/></svg>
<div style="left:425.8px;top:100.7px;width:4.4px;height:1.2px;background:#e4e4e4;"></div>
<div style="left:456px;top:100.7px;width:4.4px;height:1.2px;background:#e4e4e4;"></div>
<div style="left:427.0px;top:104.48px;width:3.2px;height:1.2px;background:#e4e4e4;"></div>
<div style="left:456px;top:104.48px;width:3.2px;height:1.2px;background:#e4e4e4;"></div>
<div style="left:427.0px;top:108.25px;width:3.2px;height:1.2px;background:#e4e4e4;"></div>
<div style="left:456px;top:108.25px;width:3.2px;height:1.2px;background:#e4e4e4;"></div>
<div style="left:427.0px;top:112.03px;width:3.2px;height:1.2px;background:#e4e4e4;"></div>
<div style="left:456px;top:112.03px;width:3.2px;height:1.2px;background:#e4e4e4;"></div>
<div style="left:427.0px;top:115.81px;width:3.2px;height:1.2px;background:#e4e4e4;"></div>
<div style="left:456px;top:115.81px;width:3.2px;height:1.2px;background:#e4e4e4;"></div>
<div style="left:427.0px;top:119.58px;width:3.2px;height:1.2px;background:#e4e4e4;"></div>
<div style="left:456px;top:119.58px;width:3.2px;height:1.2px;background:#e4e4e4;"></div>
<div style="left:427.0px;top:123.36px;width:3.2px;height:1.2px;background:#e4e4e4;"></div>
<div style="left:456px;top:123.36px;width:3.2px;height:1.2px;background:#e4e4e4;"></div>
<div style="left:427.0px;top:127.14px;width:3.2px;height:1.2px;background:#e4e4e4;"></div>
<div style="left:456px;top:127.14px;width:3.2px;height:1.2px;background:#e4e4e4;"></div>
<div style="left:427.0px;top:130.91px;width:3.2px;height:1.2px;background:#e4e4e4;"></div>
<div style="left:456px;top:130.91px;width:3.2px;height:1.2px;background:#e4e4e4;"></div>
<div style="left:427.0px;top:134.69px;width:3.2px;height:1.2px;background:#e4e4e4;"></div>
<div style="left:456px;top:134.69px;width:3.2px;height:1.2px;background:#e4e4e4;"></div>
<div style="left:427.0px;top:138.47px;width:3.2px;height:1.2px;background:#e4e4e4;"></div>
<div style="left:456px;top:138.47px;width:3.2px;height:1.2px;background:#e4e4e4;"></div>
<div style="left:427.0px;top:142.24px;width:3.2px;height:1.2px;background:#e4e4e4;"></div>
<div style="left:456px;top:142.24px;width:3.2px;height:1.2px;background:#e4e4e4;"></div>
<div style="left:427.0px;top:146.02px;width:3.2px;height:1.2px;background:#e4e4e4;"></div>
<div style="left:456px;top:146.02px;width:3.2px;height:1.2px;background:#e4e4e4;"></div>
<div style="left:427.0px;top:149.8px;width:3.2px;height:1.2px;background:#e4e4e4;"></div>
<div style="left:456px;top:149.8px;width:3.2px;height:1.2px;background:#e4e4e4;"></div>
<div style="left:427.0px;top:153.57px;width:3.2px;height:1.2px;background:#e4e4e4;"></div>
<div style="left:456px;top:153.57px;width:3.2px;height:1.2px;background:#e4e4e4;"></div>
<div style="left:427.0px;top:157.35px;width:3.2px;height:1.2px;background:#e4e4e4;"></div>
<div style="left:456px;top:157.35px;width:3.2px;height:1.2px;background:#e4e4e4;"></div>
<div style="left:427.0px;top:161.13px;width:3.2px;height:1.2px;background:#e4e4e4;"></div>
<div style="left:456px;top:161.13px;width:3.2px;height:1.2px;background:#e4e4e4;"></div>
<div style="left:427.0px;top:164.9px;width:3.2px;height:1.2px;background:#e4e4e4;"></div>
<div style="left:456px;top:164.9px;width:3.2px;height:1.2px;background:#e4e4e4;"></div>
<div style="left:427.0px;top:168.68px;width:3.2px;height:1.2px;background:#e4e4e4;"></div>
<div style="left:456px;top:168.68px;width:3.2px;height:1.2px;background:#e4e4e4;"></div>
<div style="left:427.0px;top:172.46px;width:3.2px;height:1.2px;background:#e4e4e4;"></div>
<div style="left:456px;top:172.46px;width:3.2px;height:1.2px;background:#e4e4e4;"></div>
<div style="left:427.0px;top:176.23px;width:3.2px;height:1.2px;background:#e4e4e4;"></div>
<div style="left:456px;top:176.23px;width:3.2px;height:1.2px;background:#e4e4e4;"></div>
<div style="left:427.0px;top:180.01px;width:3.2px;height:1.2px;background:#e4e4e4;"></div>
<div style="left:456px;top:180.01px;width:3.2px;height:1.2px;background:#e4e4e4;"></div>
<div style="left:427.0px;top:183.79px;width:3.2px;height:1.2px;background:#e4e4e4;"></div>
<div style="left:456px;top:183.79px;width:3.2px;height:1.2px;background:#e4e4e4;"></div>
<div style="left:427.0px;top:187.56px;width:3.2px;height:1.2px;background:#e4e4e4;"></div>
<div style="left:456px;top:187.56px;width:3.2px;height:1.2px;background:#e4e4e4;"></div>
<div style="left:427.0px;top:191.34px;width:3.2px;height:1.2px;background:#e4e4e4;"></div>
<div style="left:456px;top:191.34px;width:3.2px;height:1.2px;background:#e4e4e4;"></div>
<div style="left:427.0px;top:195.12px;width:3.2px;height:1.2px;background:#e4e4e4;"></div>
<div style="left:456px;top:195.12px;width:3.2px;height:1.2px;background:#e4e4e4;"></div>
<div style="left:427.0px;top:198.89px;width:3.2px;height:1.2px;background:#e4e4e4;"></div>
<div style="left:456px;top:198.89px;width:3.2px;height:1.2px;background:#e4e4e4;"></div>
<div style="left:427.0px;top:202.67px;width:3.2px;height:1.2px;background:#e4e4e4;"></div>
<div style="left:456px;top:202.67px;width:3.2px;height:1.2px;background:#e4e4e4;"></div>
<div style="left:427.0px;top:206.45px;width:3.2px;height:1.2px;background:#e4e4e4;"></div>
<div style="left:456px;top:206.45px;width:3.2px;height:1.2px;background:#e4e4e4;"></div>
<div style="left:427.0px;top:210.22px;width:3.2px;height:1.2px;background:#e4e4e4;"></div>
<div style="left:456px;top:210.22px;width:3.2px;height:1.2px;background:#e4e4e4;"></div>
<div style="left:425.8px;top:214.0px;width:4.4px;height:1.2px;background:#e4e4e4;"></div>
<div style="left:456px;top:214.0px;width:4.4px;height:1.2px;background:#e4e4e4;"></div>
<div style="left:441px;top:98px;width:4px;height:123.0px;background:linear-gradient(90deg,#f0eeea,#d2d0cc 60%,#b8b6b2);border-radius:0 0 2px 2px;"></div>
<div style="left:432.5px;top:94px;width:21px;height:9.6px;background:linear-gradient(#eceae6,#c6c4c0 55%,#dddbd7);border-radius:2px;box-shadow:0 0 0 0.6px #f6f4f0 inset;"></div>
<div style="left:549.8px;top:100.7px;width:4.4px;height:1.2px;background:#e4e4e4;"></div>
<div style="left:580px;top:100.7px;width:4.4px;height:1.2px;background:#e4e4e4;"></div>
<div style="left:551.0px;top:104.48px;width:3.2px;height:1.2px;background:#e4e4e4;"></div>
<div style="left:580px;top:104.48px;width:3.2px;height:1.2px;background:#e4e4e4;"></div>
<div style="left:551.0px;top:108.25px;width:3.2px;height:1.2px;background:#e4e4e4;"></div>
<div style="left:580px;top:108.25px;width:3.2px;height:1.2px;background:#e4e4e4;"></div>
<div style="left:551.0px;top:112.03px;width:3.2px;height:1.2px;background:#e4e4e4;"></div>
<div style="left:580px;top:112.03px;width:3.2px;height:1.2px;background:#e4e4e4;"></div>
<div style="left:551.0px;top:115.81px;width:3.2px;height:1.2px;background:#e4e4e4;"></div>
<div style="left:580px;top:115.81px;width:3.2px;height:1.2px;background:#e4e4e4;"></div>
<div style="left:551.0px;top:119.58px;width:3.2px;height:1.2px;background:#e4e4e4;"></div>
<div style="left:580px;top:119.58px;width:3.2px;height:1.2px;background:#e4e4e4;"></div>
<div style="left:551.0px;top:123.36px;width:3.2px;height:1.2px;background:#e4e4e4;"></div>
<div style="left:580px;top:123.36px;width:3.2px;height:1.2px;background:#e4e4e4;"></div>
<div style="left:551.0px;top:127.14px;width:3.2px;height:1.2px;background:#e4e4e4;"></div>
<div style="left:580px;top:127.14px;width:3.2px;height:1.2px;background:#e4e4e4;"></div>
<div style="left:551.0px;top:130.91px;width:3.2px;height:1.2px;background:#e4e4e4;"></div>
<div style="left:580px;top:130.91px;width:3.2px;height:1.2px;background:#e4e4e4;"></div>
<div style="left:551.0px;top:134.69px;width:3.2px;height:1.2px;background:#e4e4e4;"></div>
<div style="left:580px;top:134.69px;width:3.2px;height:1.2px;background:#e4e4e4;"></div>
<div style="left:551.0px;top:138.47px;width:3.2px;height:1.2px;background:#e4e4e4;"></div>
<div style="left:580px;top:138.47px;width:3.2px;height:1.2px;background:#e4e4e4;"></div>
<div style="left:551.0px;top:142.24px;width:3.2px;height:1.2px;background:#e4e4e4;"></div>
<div style="left:580px;top:142.24px;width:3.2px;height:1.2px;background:#e4e4e4;"></div>
<div style="left:551.0px;top:146.02px;width:3.2px;height:1.2px;background:#e4e4e4;"></div>
<div style="left:580px;top:146.02px;width:3.2px;height:1.2px;background:#e4e4e4;"></div>
<div style="left:551.0px;top:149.8px;width:3.2px;height:1.2px;background:#e4e4e4;"></div>
<div style="left:580px;top:149.8px;width:3.2px;height:1.2px;background:#e4e4e4;"></div>
<div style="left:551.0px;top:153.57px;width:3.2px;height:1.2px;background:#e4e4e4;"></div>
<div style="left:580px;top:153.57px;width:3.2px;height:1.2px;background:#e4e4e4;"></div>
<div style="left:551.0px;top:157.35px;width:3.2px;height:1.2px;background:#e4e4e4;"></div>
<div style="left:580px;top:157.35px;width:3.2px;height:1.2px;background:#e4e4e4;"></div>
<div style="left:551.0px;top:161.13px;width:3.2px;height:1.2px;background:#e4e4e4;"></div>
<div style="left:580px;top:161.13px;width:3.2px;height:1.2px;background:#e4e4e4;"></div>
<div style="left:551.0px;top:164.9px;width:3.2px;height:1.2px;background:#e4e4e4;"></div>
<div style="left:580px;top:164.9px;width:3.2px;height:1.2px;background:#e4e4e4;"></div>
<div style="left:551.0px;top:168.68px;width:3.2px;height:1.2px;background:#e4e4e4;"></div>
<div style="left:580px;top:168.68px;width:3.2px;height:1.2px;background:#e4e4e4;"></div>
<div style="left:551.0px;top:172.46px;width:3.2px;height:1.2px;background:#e4e4e4;"></div>
<div style="left:580px;top:172.46px;width:3.2px;height:1.2px;background:#e4e4e4;"></div>
<div style="left:551.0px;top:176.23px;width:3.2px;height:1.2px;background:#e4e4e4;"></div>
<div style="left:580px;top:176.23px;width:3.2px;height:1.2px;background:#e4e4e4;"></div>
<div style="left:551.0px;top:180.01px;width:3.2px;height:1.2px;background:#e4e4e4;"></div>
<div style="left:580px;top:180.01px;width:3.2px;height:1.2px;background:#e4e4e4;"></div>
<div style="left:551.0px;top:183.79px;width:3.2px;height:1.2px;background:#e4e4e4;"></div>
<div style="left:580px;top:183.79px;width:3.2px;height:1.2px;background:#e4e4e4;"></div>
<div style="left:551.0px;top:187.56px;width:3.2px;height:1.2px;background:#e4e4e4;"></div>
<div style="left:580px;top:187.56px;width:3.2px;height:1.2px;background:#e4e4e4;"></div>
<div style="left:551.0px;top:191.34px;width:3.2px;height:1.2px;background:#e4e4e4;"></div>
<div style="left:580px;top:191.34px;width:3.2px;height:1.2px;background:#e4e4e4;"></div>
<div style="left:551.0px;top:195.12px;width:3.2px;height:1.2px;background:#e4e4e4;"></div>
<div style="left:580px;top:195.12px;width:3.2px;height:1.2px;background:#e4e4e4;"></div>
<div style="left:551.0px;top:198.89px;width:3.2px;height:1.2px;background:#e4e4e4;"></div>
<div style="left:580px;top:198.89px;width:3.2px;height:1.2px;background:#e4e4e4;"></div>
<div style="left:551.0px;top:202.67px;width:3.2px;height:1.2px;background:#e4e4e4;"></div>
<div style="left:580px;top:202.67px;width:3.2px;height:1.2px;background:#e4e4e4;"></div>
<div style="left:551.0px;top:206.45px;width:3.2px;height:1.2px;background:#e4e4e4;"></div>
<div style="left:580px;top:206.45px;width:3.2px;height:1.2px;background:#e4e4e4;"></div>
<div style="left:551.0px;top:210.22px;width:3.2px;height:1.2px;background:#e4e4e4;"></div>
<div style="left:580px;top:210.22px;width:3.2px;height:1.2px;background:#e4e4e4;"></div>
<div style="left:549.8px;top:214.0px;width:4.4px;height:1.2px;background:#e4e4e4;"></div>
<div style="left:580px;top:214.0px;width:4.4px;height:1.2px;background:#e4e4e4;"></div>
<div style="left:565px;top:98px;width:4px;height:123.0px;background:linear-gradient(90deg,#f0eeea,#d2d0cc 60%,#b8b6b2);border-radius:0 0 2px 2px;"></div>
<div style="left:556.5px;top:94px;width:21px;height:9.6px;background:linear-gradient(#eceae6,#c6c4c0 55%,#dddbd7);border-radius:2px;box-shadow:0 0 0 0.6px #f6f4f0 inset;"></div>
<div style="left:468px;top:107px;width:74px;height:101.5px;border:1px solid #323a43;"></div>
<div style="left:480px;top:95px;width:50px;height:25px;border:1px solid #323a43;background:#525e69;"></div>
<div style="left:480px;top:196px;width:50px;height:25px;border:1px solid #323a43;background:#525e69;"></div>
<span class="t" id="t11" style="left:485.30px;top:100.75px;font-size:14px;color:#fff;font-family:'Liberation Sans', sans-serif;font-weight:bold;transform:scaleX(1.0667);-webkit-text-stroke:0.5px #fff;">A</span>
<span class="t" id="t12" style="left:514.80px;top:100.75px;font-size:14px;color:#fff;font-family:'Liberation Sans', sans-serif;font-weight:bold;transform:scaleX(0.9877);-webkit-text-stroke:0.5px #fff;">B</span>
<svg style="left:499px;top:101px;" width="12" height="12" viewBox="0 0 12 12"><path d="M0.5 4.2H6V1L11.5 6L6 11V7.8H0.5Z" fill="#fff"/></svg>
<span class="t" id="t13" style="left:482.75px;top:205.08px;font-size:9px;color:#f0f0f0;font-family:'DejaVu Sans', 'Liberation Sans', sans-serif;">Crossfade</span>
<span class="t" id="t14" style="left:419.75px;top:228.84px;font-size:10px;color:#0c1014;font-family:'DejaVu Sans', 'Liberation Sans', sans-serif;transform:scaleX(1.0333);-webkit-text-stroke:0.25px #0c1014;">[Volume]</span>
<span class="t" id="t15" style="left:543.75px;top:228.84px;font-size:10px;color:#0c1014;font-family:'DejaVu Sans', 'Liberation Sans', sans-serif;transform:scaleX(1.0333);-webkit-text-stroke:0.25px #0c1014;">[Volume]</span>
<div style="left:473.6px;top:132.2px;width:19px;height:23px;background:#eda122;"></div>
<svg style="left:473.6px;top:132.2px;" width="19.5" height="23" viewBox="0 0 19.5 23"><path d="M3 4L16 18" stroke="#5cc8f8" stroke-width="1.6" stroke-dasharray="1.6 1.4" fill="none"/><path d="M3 18L16 4" stroke="#f5306a" stroke-width="1.6" stroke-dasharray="1.6 1.4" fill="none"/></svg>
<div style="left:495.6px;top:132.2px;width:19.5px;height:23px;border:1px solid #323a43;background:#515d68;"></div>
<svg style="left:495.6px;top:132.2px;" width="19.5" height="23" viewBox="0 0 19.5 23"><path d="M2.5 5.5H8V18" stroke="#5cc8f8" stroke-width="2" fill="none"/><path d="M17 5.5H12V18" stroke="#f5306a" stroke-width="2" fill="none"/></svg>
<div style="left:517.6px;top:132.2px;width:19.5px;height:23px;border:1px solid #323a43;background:#515d68;"></div>
<svg style="left:517.6px;top:132.2px;" width="19.5" height="23" viewBox="0 0 19.5 23"><path d="M3 4.5L9.8 18" stroke="#5cc8f8" stroke-width="1.8" fill="none"/><path d="M16.5 4.5L9.8 18" stroke="#f5306a" stroke-width="1.8" fill="none"/></svg>
<div style="left:473.6px;top:160.2px;width:19.5px;height:23px;border:1px solid #323a43;background:#515d68;"></div>
<svg style="left:473.6px;top:160.2px;" width="19.5" height="23" viewBox="0 0 19.5 23"><path d="M3 6L16 17" stroke="#5cc8f8" stroke-width="2" fill="none"/><path d="M3 17L13 7H16.5" stroke="#f5306a" stroke-width="2" fill="none"/></svg>
<div style="left:495.6px;top:160.2px;width:19.5px;height:23px;border:1px solid #323a43;background:#515d68;"></div>
<svg style="left:495.6px;top:160.2px;" width="19.5" height="23" viewBox="0 0 19.5 23"><path d="M3 6H16V18.5" stroke="#5cc8f8" stroke-width="2" fill="none"/><path d="M3 18L14.5 7.5" stroke="#f5306a" stroke-width="2" fill="none"/></svg>
<div style="left:517.6px;top:160.2px;width:19.5px;height:23px;border:1px solid #323a43;background:#515d68;"></div>
<svg style="left:517.6px;top:160.2px;" width="19.5" height="23" viewBox="0 0 19.5 23"><path d="M4 7.5L16.5 18" stroke="#5cc8f8" stroke-width="2" fill="none"/><path d="M16.5 6H3.5V18.5" stroke="#f5306a" stroke-width="2" fill="none"/></svg>
<div style="left:166.3px;top:236px;width:40.4px;height:23px;background:linear-gradient(#f6f6f6,#ebebeb 48%,#dadada 52%,#e6e6e6);border:1px solid #f6f6f6;border-radius:2.5px;"></div>
<div style="left:184.2px;top:242px;width:1.8px;height:11px;background:#000;"></div>
<div style="left:187.8px;top:242px;width:1.8px;height:11px;background:#000;"></div>
<div style="left:214.2px;top:236px;width:40.6px;height:23px;background:linear-gradient(#f6f6f6,#ebebeb 48%,#dadada 52%,#e6e6e6);border:1px solid #2ab4f0;border-radius:2.5px;box-shadow:0 0 0 1px #f4fbff inset;"></div>
<div style="left:230px;top:243px;width:10px;height:10px;background:#000;"></div>
<div style="left:262.4px;top:236px;width:40.2px;height:23px;background:linear-gradient(#f6f6f6,#ebebeb 48%,#dadada 52%,#e6e6e6);border:1px solid #f6f6f6;border-radius:2.5px;"></div>
<span class="t" id="t16" style="left:266.70px;top:239.81px;font-size:17px;color:#000;font-family:'Liberation Sans', sans-serif;font-weight:bold;transform:scaleX(0.9650);-webkit-text-stroke:0.35px #000;">Cue</span>
<div style="left:310px;top:236px;width:19px;height:17.4px;background:linear-gradient(#f6f6f6,#ebebeb 48%,#dadada 52%,#e6e6e6);border:1px solid #f6f6f6;border-radius:2.5px;"></div>
<span class="t" id="t17" style="left:314.60px;top:236.96px;font-size:16px;color:#000;font-family:'Liberation Sans', sans-serif;font-weight:bold;transform:scaleX(1.0779);-webkit-text-stroke:0.3px #000;">1</span>
<div style="left:334px;top:236px;width:19px;height:17.4px;background:linear-gradient(#f6f6f6,#ebebeb 48%,#dadada 52%,#e6e6e6);border:1px solid #f6f6f6;border-radius:2.5px;"></div>
<span class="t" id="t18" style="left:338.60px;top:236.96px;font-size:16px;color:#000;font-family:'Liberation Sans', sans-serif;font-weight:bold;transform:scaleX(1.0779);-webkit-text-stroke:0.3px #000;">2</span>
<div style="left:358px;top:236px;width:19px;height:17.4px;background:linear-gradient(#f6f6f6,#ebebeb 48%,#dadada 52%,#e6e6e6);border:1px solid #f6f6f6;border-radius:2.5px;"></div>
<span class="t" id="t19" style="left:362.60px;top:236.96px;font-size:16px;color:#000;font-family:'Liberation Sans', sans-serif;font-weight:bold;transform:scaleX(1.0779);-webkit-text-stroke:0.3px #000;">3</span>
<div style="left:167.5px;top:271px;width:209px;height:8px;background:linear-gradient(#1f252b,#2a3138);border-radius:4px;"></div>
<div style="left:264px;top:267.5px;width:16px;height:16px;border-radius:50%;background:radial-gradient(circle at 50% 40%,#ffffff 0,#e8e8e8 45%,#b4b4b4 100%);box-shadow:0 0 1px #333;"></div>
<span class="t" id="t20" style="left:168.30px;top:281.19px;font-size:11px;color:#000;font-family:'Liberation Sans', sans-serif;font-weight:bold;">-</span>
<span class="t" id="t21" style="left:369.50px;top:281.69px;font-size:11px;color:#000;font-family:'Liberation Sans', sans-serif;">+</span>
<div style="left:635.3px;top:236px;width:40.4px;height:23px;background:linear-gradient(#f6f6f6,#ebebeb 48%,#dadada 52%,#e6e6e6);border:1px solid #f6f6f6;border-radius:2.5px;"></div>
<div style="left:653.2px;top:242px;width:1.8px;height:11px;background:#000;"></div>
<div style="left:656.8px;top:242px;width:1.8px;height:11px;background:#000;"></div>
<div style="left:683.2px;top:236px;width:40.6px;height:23px;background:linear-gradient(#f6f6f6,#ebebeb 48%,#dadada 52%,#e6e6e6);border:1px solid #2ab4f0;border-radius:2.5px;box-shadow:0 0 0 1px #f4fbff inset;"></div>
<div style="left:699px;top:243px;width:10px;height:10px;background:#000;"></div>
<div style="left:731.4px;top:236px;width:40.2px;height:23px;background:linear-gradient(#f6f6f6,#ebebeb 48%,#dadada 52%,#e6e6e6);border:1px solid #f6f6f6;border-radius:2.5px;"></div>
<span class="t" id="t22" style="left:735.70px;top:239.81px;font-size:17px;color:#000;font-family:'Liberation Sans', sans-serif;font-weight:bold;transform:scaleX(0.9650);-webkit-text-stroke:0.35px #000;">Cue</span>
<div style="left:779px;top:236px;width:19px;height:17.4px;background:linear-gradient(#f6f6f6,#ebebeb 48%,#dadada 52%,#e6e6e6);border:1px solid #f6f6f6;border-radius:2.5px;"></div>
<span class="t" id="t23" style="left:783.60px;top:236.96px;font-size:16px;color:#000;font-family:'Liberation Sans', sans-serif;font-weight:bold;transform:scaleX(1.0779);-webkit-text-stroke:0.3px #000;">1</span>
<div style="left:803px;top:236px;width:19px;height:17.4px;background:linear-gradient(#f6f6f6,#ebebeb 48%,#dadada 52%,#e6e6e6);border:1px solid #f6f6f6;border-radius:2.5px;"></div>
<span class="t" id="t24" style="left:807.60px;top:236.96px;font-size:16px;color:#000;font-family:'Liberation Sans', sans-serif;font-weight:bold;transform:scaleX(1.0779);-webkit-text-stroke:0.3px #000;">2</span>
<div style="left:827px;top:236px;width:19px;height:17.4px;background:linear-gradient(#f6f6f6,#ebebeb 48%,#dadada 52%,#e6e6e6);border:1px solid #f6f6f6;border-radius:2.5px;"></div>
<span class="t" id="t25" style="left:831.60px;top:236.96px;font-size:16px;color:#000;font-family:'Liberation Sans', sans-serif;font-weight:bold;transform:scaleX(1.0779);-webkit-text-stroke:0.3px #000;">3</span>
<div style="left:634.5px;top:271px;width:209px;height:8px;background:linear-gradient(#1f252b,#2a3138);border-radius:4px;"></div>
<div style="left:731px;top:267.5px;width:16px;height:16px;border-radius:50%;background:radial-gradient(circle at 50% 40%,#ffffff 0,#e8e8e8 45%,#b4b4b4 100%);box-shadow:0 0 1px #333;"></div>
<span class="t" id="t26" style="left:635.30px;top:281.19px;font-size:11px;color:#000;font-family:'Liberation Sans', sans-serif;font-weight:bold;">-</span>
<span class="t" id="t27" style="left:836.50px;top:281.69px;font-size:11px;color:#000;font-family:'Liberation Sans', sans-serif;">+</span>
<span class="t" id="t28" style="left:385.00px;top:270.04px;font-size:10px;color:#0c1014;font-family:'DejaVu Sans', 'Liberation Sans', sans-serif;transform:scaleX(1.0169);-webkit-text-stroke:0.25px #0c1014;">[Pitch]</span>
<span class="t" id="t29" style="left:592.70px;top:270.04px;font-size:10px;color:#0c1014;font-family:'DejaVu Sans', 'Liberation Sans', sans-serif;transform:scaleX(1.0169);-webkit-text-stroke:0.25px #0c1014;">[Pitch]</span>
<div style="left:6px;top:230.8px;width:153px;height:64.8px;border:1px solid #323a43;"></div>
<div style="left:14px;top:241px;width:25px;height:21px;border:1px solid #323a43;background:#515d68;"></div>
<div style="left:21.8px;top:249.8px;width:10px;height:2.2px;background:#fff;"></div>
<div style="left:46px;top:241px;width:73px;height:21px;border:1px solid #323a43;background:#515d68;"></div>
<span class="t" id="t30" style="left:65.75px;top:245.00px;font-size:13px;color:#fff;font-family:'Liberation Sans', sans-serif;transform:scaleX(0.8424);">Loop 2</span>
<div style="left:126px;top:241px;width:25px;height:21px;border:1px solid #323a43;background:#515d68;"></div>
<div style="left:134px;top:249.8px;width:10px;height:2.2px;background:#fff;"></div>
<div style="left:138px;top:246px;width:2px;height:10px;background:#fff;"></div>
<div style="left:22px;top:267px;width:57px;height:21px;border:1px solid #323a43;background:#515d68;"></div>
<span class="t" id="t31" style="left:31.80px;top:273.88px;font-size:9px;color:#e8e8e8;font-family:'DejaVu Sans', 'Liberation Sans', sans-serif;font-weight:bold;transform:scaleX(0.9883);">Loop In</span>
<div style="left:86px;top:267px;width:57px;height:21px;border:1px solid #323a43;background:#515d68;"></div>
<span class="t" id="t32" style="left:91.80px;top:273.88px;font-size:9px;color:#e8e8e8;font-family:'DejaVu Sans', 'Liberation Sans', sans-serif;font-weight:bold;transform:scaleX(0.9773);">Loop Out</span>
<div style="left:852px;top:230.8px;width:153px;height:64.8px;border:1px solid #323a43;"></div>
<div style="left:860px;top:241px;width:25px;height:21px;border:1px solid #323a43;background:#515d68;"></div>
<div style="left:867.8px;top:249.8px;width:10px;height:2.2px;background:#fff;"></div>
<div style="left:892px;top:241px;width:73px;height:21px;border:1px solid #323a43;background:#515d68;"></div>
<span class="t" id="t33" style="left:911.75px;top:245.00px;font-size:13px;color:#fff;font-family:'Liberation Sans', sans-serif;transform:scaleX(0.8424);">Loop 4</span>
<div style="left:972px;top:241px;width:25px;height:21px;border:1px solid #323a43;background:#515d68;"></div>
<div style="left:980px;top:249.8px;width:10px;height:2.2px;background:#fff;"></div>
<div style="left:984px;top:246px;width:2px;height:10px;background:#fff;"></div>
<div style="left:868px;top:267px;width:57px;height:21px;border:1px solid #323a43;background:#515d68;"></div>
<span class="t" id="t34" style="left:877.80px;top:273.88px;font-size:9px;color:#e8e8e8;font-family:'DejaVu Sans', 'Liberation Sans', sans-serif;font-weight:bold;transform:scaleX(0.9883);">Loop In</span>
<div style="left:932px;top:267px;width:57px;height:21px;border:1px solid #323a43;background:#515d68;"></div>
<span class="t" id="t35" style="left:937.80px;top:273.88px;font-size:9px;color:#e8e8e8;font-family:'DejaVu Sans', 'Liberation Sans', sans-serif;font-weight:bold;transform:scaleX(0.9773);">Loop Out</span>
<div style="left:6px;top:310px;width:1000px;height:1px;background:#323a43;"></div>
<div style="left:6px;top:349px;width:1000px;height:1px;background:#323a43;"></div>
<div style="left:166px;top:323px;width:130px;height:26px;border:1px solid #323a43;border-bottom:none;"></div>
<span class="t" id="t36" style="left:225.00px;top:330.00px;font-size:13px;color:#fff;font-family:'Liberation Sans', sans-serif;transform:scaleX(1.0270);">Playlist</span>
<div style="left:303px;top:323px;width:130px;height:26px;border:1px solid #323a43;border-bottom:none;"></div>
<span class="t" id="t37" style="left:355.60px;top:330.00px;font-size:13px;color:#fff;font-family:'Liberation Sans', sans-serif;transform:scaleX(1.0147);">Equalizer</span>
<div style="left:440px;top:323px;width:130px;height:26px;border:1px solid #323a43;border-bottom:none;"></div>
<span class="t" id="t38" style="left:496.00px;top:330.00px;font-size:13px;color:#fff;font-family:'Liberation Sans', sans-serif;">Sampler</span>
<div style="left:577px;top:323px;width:130px;height:26px;border:1px solid #323a43;border-bottom:none;"></div>
<span class="t" id="t39" style="left:636.30px;top:330.00px;font-size:13px;color:#fff;font-family:'Liberation Sans', sans-serif;">Effects</span>
<div style="left:714px;top:323px;width:130px;height:26px;border:1px solid #323a43;border-bottom:none;background:#eba528;"></div>
<span class="t" id="t40" style="left:765.60px;top:330.00px;font-size:13px;color:#fff;font-family:'Liberation Sans', sans-serif;transform:scaleX(0.9950);">Recorder</span>
<svg style="left:174px;top:329px;" width="26" height="15" viewBox="0 0 26 15"><path d="M1 4.5L4.5 7L1 9.5Z" fill="#fff"/><rect x="9.8" y="1.3" width="13.4" height="3.1" rx="1" fill="#fff"/><rect x="9.8" y="5.7" width="13.4" height="3.1" rx="1" fill="#fff"/><rect x="9.8" y="10.2" width="13.4" height="3.2" rx="1" fill="#fff"/></svg>
<svg style="left:317px;top:328px;" width="20" height="16" viewBox="0 0 20 16"><path d="M3 1.5V14.5M9.5 1.5V14.5M16 1.5V14.5" stroke="#fff" stroke-width="2" fill="none"/><path d="M0.5 6H5.5M7 10.5H12M13.5 5H18.5" stroke="#fff" stroke-width="2.4" fill="none"/></svg>
<svg style="left:454px;top:327px;" width="20" height="18" viewBox="0 0 20 18"><path d="M6.2 14V3.5H16.8V13" stroke="#fff" stroke-width="1.6" fill="none"/><path d="M6.2 3.5H16.8" stroke="#fff" stroke-width="2.6" fill="none"/><ellipse cx="4" cy="14.2" rx="3" ry="2.2" fill="#fff"/><ellipse cx="14.6" cy="13.2" rx="3" ry="2.2" fill="#fff"/></svg>
<svg style="left:591px;top:327px;" width="20" height="18" viewBox="0 0 20 18"><path d="M0 -3.6L1 -1.2L3.6 -1.1L1.6 0.5L2.3 3L0 1.6L-2.3 3L-1.6 0.5L-3.6 -1.1L-1 -1.2Z" fill="#fff" transform="translate(6 5)"/><path d="M0 -3.6L1 -1.2L3.6 -1.1L1.6 0.5L2.3 3L0 1.6L-2.3 3L-1.6 0.5L-3.6 -1.1L-1 -1.2Z" fill="#fff" transform="translate(14 4.5)"/><path d="M0 -3.6L1 -1.2L3.6 -1.1L1.6 0.5L2.3 3L0 1.6L-2.3 3L-1.6 0.5L-3.6 -1.1L-1 -1.2Z" fill="#fff" transform="translate(4.5 13)"/><path d="M0 -3.6L1 -1.2L3.6 -1.1L1.6 0.5L2.3 3L0 1.6L-2.3 3L-1.6 0.5L-3.6 -1.1L-1 -1.2Z" fill="#fff" transform="translate(12 12.5)"/></svg>
<svg style="left:729px;top:328px;" width="16" height="18" viewBox="0 0 16 18"><rect x="5.1" y="1.8" width="5.4" height="8.4" rx="2.7" fill="#fff"/><path d="M2.8 7.2C2.8 12.6 12.8 12.6 12.8 7.2" stroke="#fff" stroke-width="1.4" fill="none"/><path d="M7.8 11.5V14M4.8 14.4H10.8" stroke="#fff" stroke-width="1.4" fill="none"/></svg>
<div style="left:56px;top:379px;width:14px;height:14px;border:1px solid #2e363e;background:#eda122;"></div>
<div style="left:71px;top:379px;width:14px;height:14px;border:1px solid #2e363e;background:#4c5762;"></div>
<div style="left:86px;top:379px;width:14px;height:14px;border:1px solid #2e363e;background:#4c5762;"></div>
<svg style="left:57px;top:380px;" width="12" height="12" viewBox="0 0 12 12"><rect x="0.3" y="6.2" width="1.5" height="4.4" fill="#fff"/><rect x="3.3" y="4.1" width="1.5" height="6.5" fill="#fff"/><rect x="6.3" y="2" width="1.5" height="8.6" fill="#fff"/><rect x="9.3" y="3.2" width="1.5" height="7.4" fill="#fff"/></svg>
<svg style="left:72px;top:380px;" width="12" height="12" viewBox="0 0 12 12"><path d="M1.5 5V9.5M3.5 2.5V10.5M5.5 1.2V10.8M7.5 1.5V10M9.5 2.8V10.6" stroke="#fff" stroke-width="1" fill="none"/><path d="M2.5 5.5V8M4.5 5V9M6.5 4V8M8.5 5V8.5M10.5 4.5V7.5" stroke="#fff" stroke-width="1" fill="none" opacity=".45"/></svg>
<svg style="left:87px;top:380px;" width="12" height="12" viewBox="0 0 12 12"><path d="M2.7 7.9C1 6.4 2 4 4.2 4C6.2 4 6.2 8 8.4 8.1C10.3 8.2 11 7.2 10.2 5.8" stroke="#fff" stroke-width="1.9" fill="none" stroke-linecap="round"/></svg>
<div style="left:61.1px;top:404.9px;width:4.4px;height:1.2px;background:#e4e4e4;"></div>
<div style="left:91.3px;top:404.9px;width:4.4px;height:1.2px;background:#e4e4e4;"></div>
<div style="left:62.3px;top:408.67px;width:3.2px;height:1.2px;background:#e4e4e4;"></div>
<div style="left:91.3px;top:408.67px;width:3.2px;height:1.2px;background:#e4e4e4;"></div>
<div style="left:62.3px;top:412.45px;width:3.2px;height:1.2px;background:#e4e4e4;"></div>
<div style="left:91.3px;top:412.45px;width:3.2px;height:1.2px;background:#e4e4e4;"></div>
<div style="left:62.3px;top:416.22px;width:3.2px;height:1.2px;background:#e4e4e4;"></div>
<div style="left:91.3px;top:416.22px;width:3.2px;height:1.2px;background:#e4e4e4;"></div>
<div style="left:62.3px;top:419.99px;width:3.2px;height:1.2px;background:#e4e4e4;"></div>
<div style="left:91.3px;top:419.99px;width:3.2px;height:1.2px;background:#e4e4e4;"></div>
<div style="left:62.3px;top:423.77px;width:3.2px;height:1.2px;background:#e4e4e4;"></div>
<div style="left:91.3px;top:423.77px;width:3.2px;height:1.2px;background:#e4e4e4;"></div>
<div style="left:62.3px;top:427.54px;width:3.2px;height:1.2px;background:#e4e4e4;"></div>
<div style="left:91.3px;top:427.54px;width:3.2px;height:1.2px;background:#e4e4e4;"></div>
<div style="left:62.3px;top:431.31px;width:3.2px;height:1.2px;background:#e4e4e4;"></div>
<div style="left:91.3px;top:431.31px;width:3.2px;height:1.2px;background:#e4e4e4;"></div>
<div style="left:62.3px;top:435.09px;width:3.2px;height:1.2px;background:#e4e4e4;"></div>
<div style="left:91.3px;top:435.09px;width:3.2px;height:1.2px;background:#e4e4e4;"></div>
<div style="left:62.3px;top:438.86px;width:3.2px;height:1.2px;background:#e4e4e4;"></div>
<div style="left:91.3px;top:438.86px;width:3.2px;height:1.2px;background:#e4e4e4;"></div>
<div style="left:62.3px;top:442.63px;width:3.2px;height:1.2px;background:#e4e4e4;"></div>
<div style="left:91.3px;top:442.63px;width:3.2px;height:1.2px;background:#e4e4e4;"></div>
<div style="left:62.3px;top:446.41px;width:3.2px;height:1.2px;background:#e4e4e4;"></div>
<div style="left:91.3px;top:446.41px;width:3.2px;height:1.2px;background:#e4e4e4;"></div>
<div style="left:62.3px;top:450.18px;width:3.2px;height:1.2px;background:#e4e4e4;"></div>
<div style="left:91.3px;top:450.18px;width:3.2px;height:1.2px;background:#e4e4e4;"></div>
<div style="left:62.3px;top:453.95px;width:3.2px;height:1.2px;background:#e4e4e4;"></div>
<div style="left:91.3px;top:453.95px;width:3.2px;height:1.2px;background:#e4e4e4;"></div>
<div style="left:62.3px;top:457.73px;width:3.2px;height:1.2px;background:#e4e4e4;"></div>
<div style="left:91.3px;top:457.73px;width:3.2px;height:1.2px;background:#e4e4e4;"></div>
<div style="left:62.3px;top:461.5px;width:3.2px;height:1.2px;background:#e4e4e4;"></div>
<div style="left:91.3px;top:461.5px;width:3.2px;height:1.2px;background:#e4e4e4;"></div>
<div style="left:62.3px;top:465.27px;width:3.2px;height:1.2px;background:#e4e4e4;"></div>
<div style="left:91.3px;top:465.27px;width:3.2px;height:1.2px;background:#e4e4e4;"></div>
<div style="left:62.3px;top:469.05px;width:3.2px;height:1.2px;background:#e4e4e4;"></div>
<div style="left:91.3px;top:469.05px;width:3.2px;height:1.2px;background:#e4e4e4;"></div>
<div style="left:62.3px;top:472.82px;width:3.2px;height:1.2px;background:#e4e4e4;"></div>
<div style="left:91.3px;top:472.82px;width:3.2px;height:1.2px;background:#e4e4e4;"></div>
<div style="left:62.3px;top:476.59px;width:3.2px;height:1.2px;background:#e4e4e4;"></div>
<div style="left:91.3px;top:476.59px;width:3.2px;height:1.2px;background:#e4e4e4;"></div>
<div style="left:62.3px;top:480.37px;width:3.2px;height:1.2px;background:#e4e4e4;"></div>
<div style="left:91.3px;top:480.37px;width:3.2px;height:1.2px;background:#e4e4e4;"></div>
<div style="left:62.3px;top:484.14px;width:3.2px;height:1.2px;background:#e4e4e4;"></div>
<div style="left:91.3px;top:484.14px;width:3.2px;height:1.2px;background:#e4e4e4;"></div>
<div style="left:62.3px;top:487.91px;width:3.2px;height:1.2px;background:#e4e4e4;"></div>
<div style="left:91.3px;top:487.91px;width:3.2px;height:1.2px;background:#e4e4e4;"></div>
<div style="left:62.3px;top:491.69px;width:3.2px;height:1.2px;background:#e4e4e4;"></div>
<div style="left:91.3px;top:491.69px;width:3.2px;height:1.2px;background:#e4e4e4;"></div>
<div style="left:62.3px;top:495.46px;width:3.2px;height:1.2px;background:#e4e4e4;"></div>
<div style="left:91.3px;top:495.46px;width:3.2px;height:1.2px;background:#e4e4e4;"></div>
<div style="left:62.3px;top:499.23px;width:3.2px;height:1.2px;background:#e4e4e4;"></div>
<div style="left:91.3px;top:499.23px;width:3.2px;height:1.2px;background:#e4e4e4;"></div>
<div style="left:62.3px;top:503.01px;width:3.2px;height:1.2px;background:#e4e4e4;"></div>
<div style="left:91.3px;top:503.01px;width:3.2px;height:1.2px;background:#e4e4e4;"></div>
<div style="left:62.3px;top:506.78px;width:3.2px;height:1.2px;background:#e4e4e4;"></div>
<div style="left:91.3px;top:506.78px;width:3.2px;height:1.2px;background:#e4e4e4;"></div>
<div style="left:62.3px;top:510.55px;width:3.2px;height:1.2px;background:#e4e4e4;"></div>
<div style="left:91.3px;top:510.55px;width:3.2px;height:1.2px;background:#e4e4e4;"></div>
<div style="left:62.3px;top:514.33px;width:3.2px;height:1.2px;background:#e4e4e4;"></div>
<div style="left:91.3px;top:514.33px;width:3.2px;height:1.2px;background:#e4e4e4;"></div>
<div style="left:61.1px;top:518.1px;width:4.4px;height:1.2px;background:#e4e4e4;"></div>
<div style="left:91.3px;top:518.1px;width:4.4px;height:1.2px;background:#e4e4e4;"></div>
<div style="left:76.3px;top:402px;width:4px;height:123.10000000000002px;background:linear-gradient(90deg,#f0eeea,#d2d0cc 60%,#b8b6b2);border-radius:0 0 2px 2px;"></div>
<div style="left:67.8px;top:398px;width:21px;height:9.6px;background:linear-gradient(#eceae6,#c6c4c0 55%,#dddbd7);border-radius:2px;box-shadow:0 0 0 0.6px #f6f4f0 inset;"></div>
<span class="t" id="t41" style="left:61.75px;top:532.83px;font-size:10px;color:#0c1014;font-family:'DejaVu Sans', 'Liberation Sans', sans-serif;transform:scaleX(1.0228);-webkit-text-stroke:0.25px #0c1014;">[Gain]</span>
<div style="left:105px;top:374px;width:40px;height:153px;background:#000;"></div>
<div style="left:105px;top:437px;width:19px;height:90px;background:#00fa00;"></div>
<div style="left:105px;top:427px;width:19px;height:3px;background:#f00;"></div>
<div style="left:125px;top:448px;width:19px;height:79px;background:#00fa00;"></div>
<div style="left:125px;top:418px;width:19px;height:3px;background:#f00;"></div>
<div style="left:147px;top:374px;width:231px;height:153px;background:#000;"></div>
<svg style="left:147px;top:374px;shape-rendering:crispEdges;" width="231" height="153" viewBox="0 0 231 153"><rect x="0" y="118" width="3" height="35" fill="#00fa00"/><rect x="0" y="115" width="3" height="3" fill="#f00"/><rect x="4" y="61" width="3" height="92" fill="#00fa00"/><rect x="4" y="58" width="3" height="3" fill="#f00"/><rect x="8" y="41" width="3" height="112" fill="#00fa00"/><rect x="8" y="38" width="3" height="3" fill="#f00"/><rect x="12" y="71" width="3" height="82" fill="#00fa00"/><rect x="12" y="68" width="3" height="3" fill="#f00"/><rect x="16" y="93" width="3" height="60" fill="#00fa00"/><rect x="16" y="79" width="3" height="3" fill="#f00"/><rect x="20" y="87" width="3" height="66" fill="#00fa00"/><rect x="20" y="70" width="3" height="3" fill="#f00"/><rect x="24" y="114" width="3" height="39" fill="#00fa00"/><rect x="24" y="93" width="3" height="3" fill="#f00"/><rect x="28" y="118" width="3" height="35" fill="#00fa00"/><rect x="28" y="108" width="3" height="3" fill="#f00"/><rect x="32" y="109" width="3" height="44" fill="#00fa00"/><rect x="32" y="87" width="3" height="3" fill="#f00"/><rect x="36" y="122" width="3" height="31" fill="#00fa00"/><rect x="36" y="99" width="3" height="3" fill="#f00"/><rect x="40" y="115" width="3" height="38" fill="#00fa00"/><rect x="40" y="104" width="3" height="3" fill="#f00"/><rect x="44" y="121" width="3" height="32" fill="#00fa00"/><rect x="44" y="113" width="3" height="3" fill="#f00"/><rect x="48" y="126" width="3" height="27" fill="#00fa00"/><rect x="48" y="118" width="3" height="3" fill="#f00"/><rect x="52" y="120" width="3" height="33" fill="#00fa00"/><rect x="52" y="117" width="3" height="3" fill="#f00"/><rect x="56" y="121" width="3" height="32" fill="#00fa00"/><rect x="56" y="118" width="3" height="3" fill="#f00"/><rect x="60" y="121" width="3" height="32" fill="#00fa00"/><rect x="60" y="115" width="3" height="3" fill="#f00"/><rect x="64" y="125" width="3" height="28" fill="#00fa00"/><rect x="64" y="115" width="3" height="3" fill="#f00"/><rect x="68" y="114" width="3" height="39" fill="#00fa00"/><rect x="68" y="111" width="3" height="3" fill="#f00"/><rect x="72" y="113" width="3" height="40" fill="#00fa00"/><rect x="72" y="103" width="3" height="3" fill="#f00"/><rect x="76" y="121" width="3" height="32" fill="#00fa00"/><rect x="76" y="111" width="3" height="3" fill="#f00"/><rect x="80" y="133" width="3" height="20" fill="#00fa00"/><rect x="80" y="122" width="3" height="3" fill="#f00"/><rect x="84" y="133" width="3" height="20" fill="#00fa00"/><rect x="84" y="118" width="3" height="3" fill="#f00"/><rect x="88" y="135" width="3" height="18" fill="#00fa00"/><rect x="88" y="95" width="3" height="3" fill="#f00"/><rect x="92" y="99" width="3" height="54" fill="#00fa00"/><rect x="92" y="54" width="3" height="3" fill="#f00"/><rect x="96" y="102" width="3" height="51" fill="#00fa00"/><rect x="96" y="60" width="3" height="3" fill="#f00"/><rect x="100" y="111" width="3" height="42" fill="#00fa00"/><rect x="100" y="64" width="3" height="3" fill="#f00"/><rect x="104" y="78" width="3" height="75" fill="#00fa00"/><rect x="104" y="51" width="3" height="3" fill="#f00"/><rect x="108" y="82" width="3" height="71" fill="#00fa00"/><rect x="108" y="73" width="3" height="3" fill="#f00"/><rect x="112" y="123" width="3" height="30" fill="#00fa00"/><rect x="112" y="113" width="3" height="3" fill="#f00"/><rect x="116" y="134" width="3" height="19" fill="#00fa00"/><rect x="116" y="115" width="3" height="3" fill="#f00"/><rect x="120" y="134" width="3" height="19" fill="#00fa00"/><rect x="120" y="106" width="3" height="3" fill="#f00"/><rect x="124" y="138" width="3" height="15" fill="#00fa00"/><rect x="124" y="98" width="3" height="3" fill="#f00"/><rect x="128" y="136" width="3" height="17" fill="#00fa00"/><rect x="128" y="101" width="3" height="3" fill="#f00"/><rect x="132" y="125" width="3" height="28" fill="#00fa00"/><rect x="132" y="121" width="3" height="3" fill="#f00"/><rect x="136" y="88" width="3" height="65" fill="#00fa00"/><rect x="136" y="66" width="3" height="3" fill="#f00"/><rect x="140" y="114" width="3" height="39" fill="#00fa00"/><rect x="140" y="110" width="3" height="3" fill="#f00"/><rect x="144" y="97" width="3" height="56" fill="#00fa00"/><rect x="144" y="95" width="3" height="3" fill="#f00"/><rect x="148" y="112" width="3" height="41" fill="#00fa00"/><rect x="148" y="104" width="3" height="3" fill="#f00"/><rect x="152" y="130" width="3" height="23" fill="#00fa00"/><rect x="152" y="121" width="3" height="3" fill="#f00"/><rect x="156" y="105" width="3" height="48" fill="#00fa00"/><rect x="156" y="93" width="3" height="3" fill="#f00"/><rect x="160" y="105" width="3" height="48" fill="#00fa00"/><rect x="160" y="96" width="3" height="3" fill="#f00"/><rect x="164" y="116" width="3" height="37" fill="#00fa00"/><rect x="164" y="108" width="3" height="3" fill="#f00"/><rect x="168" y="95" width="3" height="58" fill="#00fa00"/><rect x="168" y="90" width="3" height="3" fill="#f00"/><rect x="172" y="114" width="3" height="39" fill="#00fa00"/><rect x="172" y="111" width="3" height="3" fill="#f00"/><rect x="176" y="114" width="3" height="39" fill="#00fa00"/><rect x="176" y="107" width="3" height="3" fill="#f00"/><rect x="180" y="111" width="3" height="42" fill="#00fa00"/><rect x="180" y="100" width="3" height="3" fill="#f00"/><rect x="184" y="119" width="3" height="34" fill="#00fa00"/><rect x="184" y="100" width="3" height="3" fill="#f00"/><rect x="188" y="119" width="3" height="34" fill="#00fa00"/><rect x="188" y="110" width="3" height="3" fill="#f00"/><rect x="192" y="115" width="3" height="38" fill="#00fa00"/><rect x="192" y="110" width="3" height="3" fill="#f00"/><rect x="196" y="125" width="3" height="28" fill="#00fa00"/><rect x="196" y="113" width="3" height="3" fill="#f00"/><rect x="200" y="131" width="3" height="22" fill="#00fa00"/><rect x="200" y="122" width="3" height="3" fill="#f00"/><rect x="204" y="131" width="3" height="22" fill="#00fa00"/><rect x="204" y="125" width="3" height="3" fill="#f00"/><rect x="208" y="137" width="3" height="16" fill="#00fa00"/><rect x="208" y="123" width="3" height="3" fill="#f00"/><rect x="212" y="126" width="3" height="27" fill="#00fa00"/><rect x="212" y="121" width="3" height="3" fill="#f00"/><rect x="216" y="132" width="3" height="21" fill="#00fa00"/><rect x="216" y="127" width="3" height="3" fill="#f00"/><rect x="220" y="136" width="3" height="17" fill="#00fa00"/><rect x="220" y="130" width="3" height="3" fill="#f00"/><rect x="224" y="138" width="3" height="15" fill="#00fa00"/><rect x="224" y="135" width="3" height="3" fill="#f00"/><rect x="228" y="144" width="3" height="9" fill="#00fa00"/><rect x="228" y="141" width="3" height="3" fill="#f00"/></svg>
<div style="left:105px;top:531px;width:38px;height:27px;border:1px solid #323a43;background:#546069;"></div>
<svg style="left:112px;top:532.5px;" width="24" height="24" viewBox="0 0 24 24"><polygon points="21.41,10.09 21.41,13.91 18.74,14.54 18.56,14.97 20.00,17.30 17.30,20.00 14.97,18.56 14.54,18.74 13.91,21.41 10.09,21.41 9.46,18.74 9.03,18.56 6.70,20.00 4.00,17.30 5.44,14.97 5.26,14.54 2.59,13.91 2.59,10.09 5.26,9.46 5.44,9.03 4.00,6.70 6.70,4.00 9.03,5.44 9.46,5.26 10.09,2.59 13.91,2.59 14.54,5.26 14.97,5.44 17.30,4.00 20.00,6.70 18.56,9.03 18.74,9.46" fill="none" stroke="#7d8790" stroke-width="1.2" stroke-linejoin="round"/><circle cx="12" cy="12" r="4" fill="none" stroke="#7d8790" stroke-width="1.2"/></svg>
<div style="left:147px;top:531.3px;width:190px;height:26.5px;border:1px solid #f0a030;background:#c00000;"></div>
<span class="t" id="t42" style="left:200.50px;top:540.68px;font-size:9px;color:#f4f4f4;font-family:'DejaVu Sans', 'Liberation Sans', sans-serif;font-weight:bold;transform:scaleX(0.9788);">Pause Recording</span>
<div style="left:341px;top:531.3px;width:38px;height:26.5px;border:1px solid #323a43;background:#515d68;"></div>
<span class="t" id="t43" style="left:348.75px;top:540.68px;font-size:9px;color:#f0f0f0;font-family:'DejaVu Sans', 'Liberation Sans', sans-serif;font-weight:bold;transform:scaleX(0.9606);">Stop</span>
<span class="t" id="t44" style="left:193.50px;top:575.04px;font-size:12px;color:#fff;font-family:'Liberation Sans', sans-serif;transform:scaleX(0.8803);">Duration: 00:13.781</span>
<span class="t" id="t45" style="left:200.50px;top:595.84px;font-size:12px;color:#fff;font-family:'Liberation Sans', sans-serif;transform:scaleX(0.8583);">File Size: 212 KB</span>
<div style="left:434px;top:374.5px;width:515px;height:18px;border:1px solid #3d4650;background:#566370;"></div>
<div style="left:460px;top:375px;width:1px;height:17px;background:#3d4650;"></div>
<div style="left:801px;top:375px;width:1px;height:17px;background:#3d4650;"></div>
<div style="left:868px;top:375px;width:1px;height:17px;background:#3d4650;"></div>
<span class="t" id="t46" style="left:467.40px;top:377.14px;font-size:12px;color:#fff;font-family:'Liberation Sans', sans-serif;transform:scaleX(0.8902);">Name</span>
<span class="t" id="t47" style="left:808.50px;top:377.14px;font-size:12px;color:#fff;font-family:'Liberation Sans', sans-serif;transform:scaleX(0.8818);">Duration</span>
<span class="t" id="t48" style="left:875.50px;top:377.14px;font-size:12px;color:#fff;font-family:'Liberation Sans', sans-serif;transform:scaleX(0.8482);">Size</span>
<div style="left:434px;top:392.5px;width:515px;height:237.5px;background:#4a545e;"></div>
<div style="left:434px;top:392.5px;width:502px;height:14.5px;background:#414b55;"></div>
<div style="left:434px;top:407px;width:502px;height:1px;background:#5b6771;"></div>
<div style="left:434px;top:408px;width:502px;height:13px;background:#4b5660;"></div>
<div style="left:434px;top:421px;width:502px;height:14px;background:#414b55;"></div>
<div style="left:434px;top:435px;width:502px;height:1px;background:#5b6771;"></div>
<div style="left:434px;top:436px;width:502px;height:13px;background:#4b5660;"></div>
<div style="left:434px;top:449px;width:502px;height:14px;background:#414b55;"></div>
<div style="left:434px;top:463px;width:502px;height:1px;background:#5b6771;"></div>
<div style="left:434px;top:464px;width:502px;height:13px;background:#4b5660;"></div>
<div style="left:434px;top:477px;width:502px;height:14px;background:#414b55;"></div>
<div style="left:434px;top:491px;width:502px;height:1px;background:#5b6771;"></div>
<div style="left:434px;top:492px;width:502px;height:13px;background:#4b5660;"></div>
<div style="left:434px;top:505px;width:502px;height:14px;background:#414b55;"></div>
<div style="left:434px;top:519px;width:502px;height:1px;background:#5b6771;"></div>
<div style="left:434px;top:520px;width:502px;height:13px;background:#4b5660;"></div>
<div style="left:434px;top:533px;width:502px;height:14px;background:#414b55;"></div>
<div style="left:434px;top:547px;width:502px;height:1px;background:#5b6771;"></div>
<div style="left:434px;top:548px;width:502px;height:13px;background:#4b5660;"></div>
<div style="left:434px;top:561px;width:502px;height:14px;background:#414b55;"></div>
<div style="left:434px;top:575px;width:502px;height:1px;background:#5b6771;"></div>
<div style="left:434px;top:576px;width:502px;height:13px;background:#4b5660;"></div>
<div style="left:434px;top:589px;width:502px;height:14px;background:#414b55;"></div>
<div style="left:434px;top:603px;width:502px;height:1px;background:#5b6771;"></div>
<div style="left:434px;top:604px;width:502px;height:13px;background:#4b5660;"></div>
<div style="left:434px;top:617px;width:502px;height:13px;background:#414b55;"></div>
<div style="left:434px;top:407px;width:502px;height:14px;background:#f0f0f0;"></div>
<div style="left:936.5px;top:392.5px;width:12.5px;height:237.5px;background:#424c56;"></div>
<div style="left:936.5px;top:392.5px;width:12.5px;height:14.5px;background:#3e4852;"></div>
<div style="left:936.5px;top:616px;width:12.5px;height:14px;background:#3e4852;"></div>
<svg style="left:939px;top:396px;" width="9" height="8" viewBox="0 0 9 8"><path d="M4.2 0.8L7.6 6.8H0.8Z" fill="#fff"/></svg>
<svg style="left:939px;top:619px;" width="9" height="8" viewBox="0 0 9 8"><path d="M4.2 7L7.6 1H0.8Z" fill="#fff"/></svg>
<span class="t" id="t49" style="left:441.50px;top:394.64px;font-size:12px;color:#fff;font-family:'Liberation Sans', sans-serif;transform:scaleX(0.8972);">1</span>
<span class="t" id="t50" style="left:467.40px;top:394.64px;font-size:12px;color:#fff;font-family:'Liberation Sans', sans-serif;transform:scaleX(0.8823);">Recording - 05-20-2017_03-14-07 PM (Recording...)</span>
<span class="t" id="t51" style="left:809.30px;top:394.64px;font-size:12px;color:#fff;font-family:'Liberation Sans', sans-serif;transform:scaleX(0.8953);">00:13.781</span>
<span class="t" id="t52" style="left:876.30px;top:394.64px;font-size:12px;color:#fff;font-family:'Liberation Sans', sans-serif;transform:scaleX(0.8762);">212 KB</span>
<span class="t" id="t53" style="left:441.50px;top:408.64px;font-size:12px;color:#000;font-family:'Liberation Sans', sans-serif;transform:scaleX(0.8972);">2</span>
<span class="t" id="t54" style="left:467.40px;top:408.64px;font-size:12px;color:#000;font-family:'Liberation Sans', sans-serif;transform:scaleX(0.8845);">Recording - 05-16-2017_11-16-09 AM</span>
<span class="t" id="t55" style="left:809.30px;top:408.64px;font-size:12px;color:#000;font-family:'Liberation Sans', sans-serif;transform:scaleX(0.8953);">00:05.468</span>
<span class="t" id="t56" style="left:876.30px;top:408.64px;font-size:12px;color:#000;font-family:'Liberation Sans', sans-serif;transform:scaleX(0.8758);">84.0 KB</span>
<span class="t" id="t57" style="left:441.50px;top:422.64px;font-size:12px;color:#fff;font-family:'Liberation Sans', sans-serif;transform:scaleX(0.8972);">3</span>
<span class="t" id="t58" style="left:467.40px;top:422.64px;font-size:12px;color:#fff;font-family:'Liberation Sans', sans-serif;transform:scaleX(0.8845);">Recording - 05-16-2017_11-15-59 AM</span>
<span class="t" id="t59" style="left:809.30px;top:422.64px;font-size:12px;color:#fff;font-family:'Liberation Sans', sans-serif;transform:scaleX(0.8953);">00:06.374</span>
<span class="t" id="t60" style="left:876.30px;top:422.64px;font-size:12px;color:#fff;font-family:'Liberation Sans', sans-serif;transform:scaleX(0.8762);">100 KB</span>
<span class="t" id="t61" style="left:441.50px;top:436.64px;font-size:12px;color:#fff;font-family:'Liberation Sans', sans-serif;transform:scaleX(0.8972);">4</span>
<span class="t" id="t62" style="left:467.40px;top:436.64px;font-size:12px;color:#fff;font-family:'Liberation Sans', sans-serif;transform:scaleX(0.8845);">Recording - 05-16-2017_11-12-40 AM</span>
<span class="t" id="t63" style="left:809.30px;top:436.64px;font-size:12px;color:#fff;font-family:'Liberation Sans', sans-serif;transform:scaleX(0.8953);">00:30.968</span>
<span class="t" id="t64" style="left:876.30px;top:436.64px;font-size:12px;color:#fff;font-family:'Liberation Sans', sans-serif;transform:scaleX(0.8762);">485 KB</span>
<span class="t" id="t65" style="left:441.50px;top:450.64px;font-size:12px;color:#fff;font-family:'Liberation Sans', sans-serif;transform:scaleX(0.8972);">5</span>
<span class="t" id="t66" style="left:467.40px;top:450.64px;font-size:12px;color:#fff;font-family:'Liberation Sans', sans-serif;transform:scaleX(0.8845);">Recording - 05-16-2017_11-07-52 AM</span>
<span class="t" id="t67" style="left:809.30px;top:450.64px;font-size:12px;color:#fff;font-family:'Liberation Sans', sans-serif;transform:scaleX(0.8953);">01:06.781</span>
<span class="t" id="t68" style="left:876.30px;top:450.64px;font-size:12px;color:#fff;font-family:'Liberation Sans', sans-serif;transform:scaleX(0.8724);">1.02 MB</span>
<span class="t" id="t69" style="left:441.50px;top:464.64px;font-size:12px;color:#fff;font-family:'Liberation Sans', sans-serif;transform:scaleX(0.8972);">6</span>
<span class="t" id="t70" style="left:467.40px;top:464.64px;font-size:12px;color:#fff;font-family:'Liberation Sans', sans-serif;transform:scaleX(0.8806);">Recording - 05-16-2017_10-48-22 AM</span>
<span class="t" id="t71" style="left:809.30px;top:464.64px;font-size:12px;color:#fff;font-family:'Liberation Sans', sans-serif;transform:scaleX(0.8953);">00:08.187</span>
<span class="t" id="t72" style="left:876.30px;top:464.64px;font-size:12px;color:#fff;font-family:'Liberation Sans', sans-serif;transform:scaleX(0.8762);">128 KB</span>
<span class="t" id="t73" style="left:441.50px;top:478.64px;font-size:12px;color:#fff;font-family:'Liberation Sans', sans-serif;transform:scaleX(0.8972);">7</span>
<span class="t" id="t74" style="left:467.40px;top:478.64px;font-size:12px;color:#fff;font-family:'Liberation Sans', sans-serif;transform:scaleX(0.8806);">Recording - 05-16-2017_10-48-17 AM</span>
<span class="t" id="t75" style="left:809.30px;top:478.64px;font-size:12px;color:#fff;font-family:'Liberation Sans', sans-serif;transform:scaleX(0.8953);">00:01.187</span>
<span class="t" id="t76" style="left:876.30px;top:478.64px;font-size:12px;color:#fff;font-family:'Liberation Sans', sans-serif;transform:scaleX(0.8758);">19.6 KB</span>
<span class="t" id="t77" style="left:441.50px;top:492.64px;font-size:12px;color:#fff;font-family:'Liberation Sans', sans-serif;transform:scaleX(0.8972);">8</span>
<span class="t" id="t78" style="left:467.40px;top:492.64px;font-size:12px;color:#fff;font-family:'Liberation Sans', sans-serif;transform:scaleX(0.8806);">Recording - 05-16-2017_10-48-14 AM</span>
<span class="t" id="t79" style="left:809.30px;top:492.64px;font-size:12px;color:#fff;font-family:'Liberation Sans', sans-serif;transform:scaleX(0.8953);">00:01.781</span>
<span class="t" id="t80" style="left:876.30px;top:492.64px;font-size:12px;color:#fff;font-family:'Liberation Sans', sans-serif;transform:scaleX(0.8758);">29.0 KB</span>
<span class="t" id="t81" style="left:441.50px;top:506.64px;font-size:12px;color:#fff;font-family:'Liberation Sans', sans-serif;transform:scaleX(0.8972);">9</span>
<span class="t" id="t82" style="left:467.40px;top:506.64px;font-size:12px;color:#fff;font-family:'Liberation Sans', sans-serif;transform:scaleX(0.8806);">Recording - 05-16-2017_10-48-04 AM</span>
<span class="t" id="t83" style="left:809.30px;top:506.64px;font-size:12px;color:#fff;font-family:'Liberation Sans', sans-serif;transform:scaleX(0.8953);">00:03.374</span>
<span class="t" id="t84" style="left:876.30px;top:506.64px;font-size:12px;color:#fff;font-family:'Liberation Sans', sans-serif;transform:scaleX(0.8758);">53.9 KB</span>
<span class="t" id="t85" style="left:845.60px;top:646.84px;font-size:12px;color:#fff;font-family:'Liberation Sans', sans-serif;transform:scaleX(0.8990);">00:00:000</span>
<div style="left:911px;top:639px;width:38px;height:27px;border:1px solid #323a43;background:#55616c;"></div>
<svg style="left:923px;top:645px;" width="14" height="15" viewBox="0 0 14 15"><path d="M1.7 1.6L12.2 7.5L1.7 13.5Z" fill="#8c949a"/></svg>
<span class="t" id="t86" style="left:434.80px;top:677.34px;font-size:12px;color:#fff;font-family:'Liberation Sans', sans-serif;transform:scaleX(0.8603);">Output Folder:</span>
<div style="left:512px;top:675px;width:360px;height:18.5px;border:1px solid #323a43;background:#55616c;"></div>
<div style="left:845.6px;top:675px;width:1px;height:18px;background:#323a43;"></div>
<span class="t" id="t87" style="left:521.40px;top:679.24px;font-size:12px;color:#fff;font-family:'Liberation Sans', sans-serif;transform:scaleX(0.9091);">C:\My Music</span>
<span class="t" id="t88" style="left:854.05px;top:680.09px;font-size:11px;color:#fff;font-family:'Liberation Sans', sans-serif;transform:scaleX(0.8582);">....</span>
<div style="left:877px;top:675px;width:72px;height:18.5px;border:1px solid #323a43;background:#515d68;"></div>
<span class="t" id="t89" style="left:882.75px;top:679.88px;font-size:9px;color:#f0f0f0;font-family:'DejaVu Sans', 'Liberation Sans', sans-serif;font-weight:bold;transform:scaleX(0.9793);">Open Folder</span>
</div></div>
</body></html>
